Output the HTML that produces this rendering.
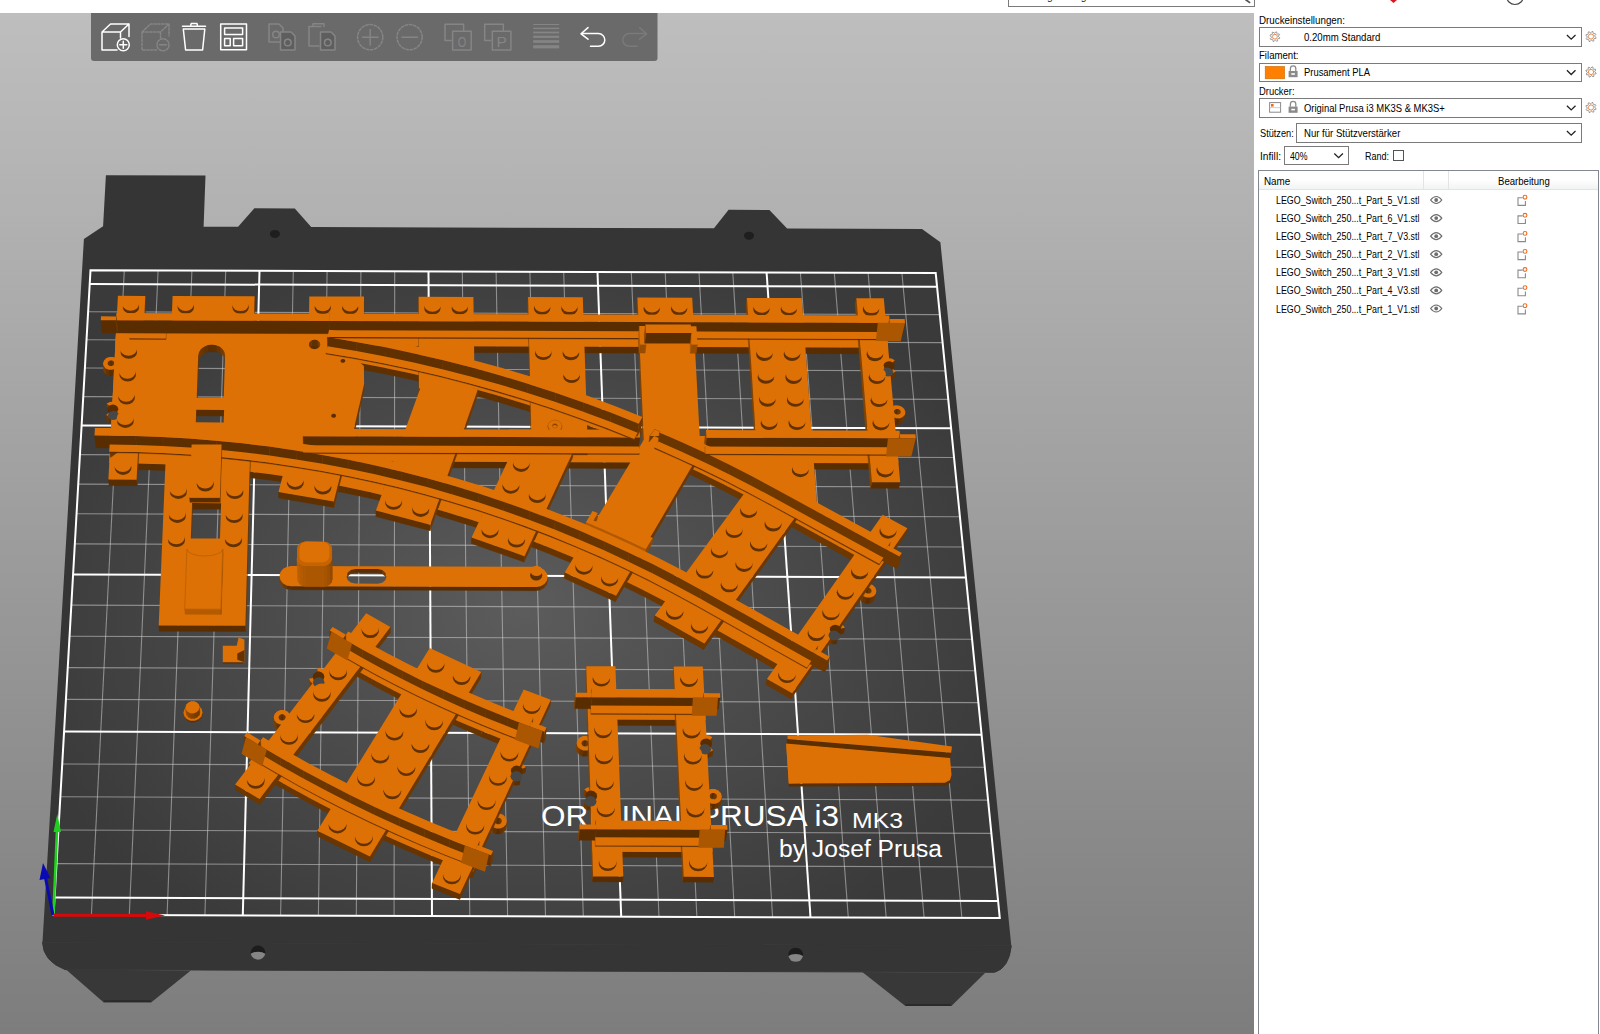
<!DOCTYPE html>
<html><head><meta charset="utf-8"><title>PrusaSlicer</title>
<style>
html,body{margin:0;padding:0;}
body{width:1600px;height:1034px;overflow:hidden;background:#fff;position:relative;font-family:"Liberation Sans",sans-serif;font-size:11px;color:#000;}
#canvas{position:absolute;left:0;top:13px;width:1254px;height:1021px;background:linear-gradient(#bebebe,#7d7d7d);}
#scene{position:absolute;left:0;top:0;width:1600px;height:1034px;}
.t{position:absolute;white-space:nowrap;line-height:14px;height:14px;transform-origin:0 50%;}
.cb{position:absolute;border:1px solid #7a7a7a;background:#fff;box-sizing:border-box;}
#list{position:absolute;left:1258px;top:170px;width:341px;height:870px;border:1px solid #828790;box-sizing:border-box;background:#fff;}
#hdr{position:absolute;left:1259px;top:171px;width:339px;height:18px;background:linear-gradient(#fff,#fff 45%,#f2f3f4);border-bottom:1px solid #e1e3e6;}
.sep{position:absolute;top:171px;width:1px;height:18px;background:#e3e4e6;}
</style></head><body>
<div id="canvas"></div>
<!-- top strip -->
<div style="position:absolute;left:1007.5px;top:-14px;width:247px;height:20.7px;border:1px solid #7a7a7a;box-sizing:border-box;"></div>
<div class="t" style="left:1012px;top:-10.8px;font-size:11.5px;color:#222;transform:scaleX(0.9);">Suchbegriff eingeben</div>
<div class="cb" style="left:1258.5px;top:27.0px;width:323.5px;height:19.6px;"></div>
<div class="cb" style="left:1258.5px;top:62.5px;width:323.5px;height:19.6px;"></div>
<div class="cb" style="left:1258.5px;top:98.0px;width:323.5px;height:19.6px;"></div>
<div class="cb" style="left:1296.0px;top:123.0px;width:286.0px;height:19.6px;"></div>
<div class="cb" style="left:1283.5px;top:146.0px;width:65.5px;height:19.0px;"></div>
<div class="cb" style="left:1393px;top:149.6px;width:11px;height:11px;border-color:#555;"></div>
<div class="t" style="left:1259.0px;top:12.5px;font-size:11.5px;color:#000;transform:scaleX(0.851);">Druckeinstellungen:</div>
<div class="t" style="left:1303.7px;top:30.0px;font-size:11.5px;color:#000;transform:scaleX(0.835);">0.20mm Standard</div>
<div class="t" style="left:1259.0px;top:48.0px;font-size:11.5px;color:#000;transform:scaleX(0.835);">Filament:</div>
<div class="t" style="left:1304.0px;top:65.3px;font-size:11.5px;color:#000;transform:scaleX(0.819);">Prusament PLA</div>
<div class="t" style="left:1259.0px;top:83.5px;font-size:11.5px;color:#000;transform:scaleX(0.817);">Drucker:</div>
<div class="t" style="left:1304.0px;top:100.7px;font-size:11.5px;color:#000;transform:scaleX(0.820);">Original Prusa i3 MK3S &amp; MK3S+</div>
<div class="t" style="left:1259.8px;top:126.0px;font-size:11.5px;color:#000;transform:scaleX(0.799);">Stützen:</div>
<div class="t" style="left:1303.7px;top:126.0px;font-size:11.5px;color:#000;transform:scaleX(0.833);">Nur für Stützverstärker</div>
<div class="t" style="left:1259.5px;top:148.5px;font-size:11.5px;color:#000;transform:scaleX(0.888);">Infill:</div>
<div class="t" style="left:1290.0px;top:148.5px;font-size:11.5px;color:#000;transform:scaleX(0.760);">40%</div>
<div class="t" style="left:1365.0px;top:148.5px;font-size:11.5px;color:#000;transform:scaleX(0.782);">Rand:</div>
<div id="list"></div><div id="hdr"></div><div class="sep" style="left:1423px"></div><div class="sep" style="left:1448px"></div>
<div class="t" style="left:1264.3px;top:173.7px;font-size:11.5px;color:#000;transform:scaleX(0.857);">Name</div>
<div class="t" style="left:1497.6px;top:173.7px;font-size:11.5px;color:#000;transform:scaleX(0.835);">Bearbeitung</div>
<div class="t" style="left:1275.5px;top:193.0px;font-size:11.5px;color:#000;transform:scaleX(0.771);">LEGO_Switch_250...t_Part_5_V1.stl</div>
<div class="t" style="left:1275.5px;top:211.1px;font-size:11.5px;color:#000;transform:scaleX(0.771);">LEGO_Switch_250...t_Part_6_V1.stl</div>
<div class="t" style="left:1275.5px;top:229.2px;font-size:11.5px;color:#000;transform:scaleX(0.771);">LEGO_Switch_250...t_Part_7_V3.stl</div>
<div class="t" style="left:1275.5px;top:247.2px;font-size:11.5px;color:#000;transform:scaleX(0.771);">LEGO_Switch_250...t_Part_2_V1.stl</div>
<div class="t" style="left:1275.5px;top:265.3px;font-size:11.5px;color:#000;transform:scaleX(0.771);">LEGO_Switch_250...t_Part_3_V1.stl</div>
<div class="t" style="left:1275.5px;top:283.4px;font-size:11.5px;color:#000;transform:scaleX(0.771);">LEGO_Switch_250...t_Part_4_V3.stl</div>
<div class="t" style="left:1275.5px;top:301.5px;font-size:11.5px;color:#000;transform:scaleX(0.771);">LEGO_Switch_250...t_Part_1_V1.stl</div>
<svg id="scene" viewBox="0 0 1600 1034">
<defs>
<radialGradient id="bedg" gradientUnits="userSpaceOnUse" cx="520" cy="610" r="520" gradientTransform="translate(520 610) scale(1 0.75) translate(-520 -610)">
<stop offset="0" stop-color="#5c5c5c"/><stop offset="0.45" stop-color="#4c4c4c"/><stop offset="1" stop-color="#3a3a3a"/>
</radialGradient>
</defs>
<polygon points="42.5,942.2 83.9,239.0 103.1,226.3 105.9,175.3 205.5,175.6 203.6,226.7 238.1,226.8 254.4,208.3 294.8,208.4 311.2,227.0 714.0,228.3 728.6,209.8 769.4,209.9 787.1,228.5 922.0,229.0 940.4,242.3 1011.3,945.8" fill="#353535"/>
<path d="M42.5,942.2 Q43,961 65,969.6 L994.6,972.3 Q1009,968 1011.3,945.8 Z" fill="#353535" stroke="#353535" stroke-width="1"/>
<polygon points="66,969.5 103.5,1002.3 151.4,1002.3 190.8,970.4" fill="#383838"/>
<polygon points="103.5,1002.3 151.4,1002.3 150.4,1000.3 104.5,1000.3" fill="#2a2a2a"/>
<polygon points="862.3,972 905.4,1006 951.4,1006 985,973" fill="#383838"/>
<polygon points="905.4,1006 951.4,1006 950.4,1004 906.4,1004" fill="#2a2a2a"/>
<ellipse cx="274.9" cy="233.9" rx="5" ry="4" fill="#1e1e1e"/>
<ellipse cx="749.0" cy="235.7" rx="5" ry="4" fill="#1e1e1e"/>
<ellipse cx="258.0" cy="952.6" rx="7.4" ry="7" fill="#1c1c1c"/>
<path d="M250.7,953.8 a7.4,7 0 0 0 14.6,0 a9,5 0 0 0 -14.6,0Z" fill="#858585"/>
<ellipse cx="795.7" cy="954.8" rx="7.4" ry="7" fill="#1c1c1c"/>
<path d="M788.4,956.0 a7.4,7 0 0 0 14.6,0 a9,5 0 0 0 -14.6,0Z" fill="#858585"/>
<polygon points="53.6,914.7 999.8,918.1 935.7,273.1 90.5,270.3" fill="url(#bedg)"/>
<g stroke="#cfcfcf" stroke-opacity="0.55" stroke-width="1.1"><line x1="91.4" y1="914.8" x2="124.3" y2="270.4"/><line x1="129.3" y1="915.0" x2="158.1" y2="270.6"/><line x1="167.1" y1="915.1" x2="191.9" y2="270.7"/><line x1="204.9" y1="915.2" x2="225.7" y2="270.8"/><line x1="280.6" y1="915.5" x2="293.3" y2="271.0"/><line x1="318.4" y1="915.6" x2="327.1" y2="271.1"/><line x1="356.3" y1="915.8" x2="360.9" y2="271.2"/><line x1="394.1" y1="915.9" x2="394.7" y2="271.3"/><line x1="469.8" y1="916.2" x2="462.3" y2="271.5"/><line x1="507.6" y1="916.3" x2="496.1" y2="271.7"/><line x1="545.5" y1="916.5" x2="529.9" y2="271.8"/><line x1="583.3" y1="916.6" x2="563.7" y2="271.9"/><line x1="659.0" y1="916.9" x2="631.3" y2="272.1"/><line x1="696.9" y1="917.0" x2="665.2" y2="272.2"/><line x1="734.7" y1="917.2" x2="699.0" y2="272.3"/><line x1="772.6" y1="917.3" x2="732.8" y2="272.4"/><line x1="848.3" y1="917.6" x2="800.4" y2="272.6"/><line x1="886.2" y1="917.7" x2="834.3" y2="272.8"/><line x1="924.1" y1="917.8" x2="868.1" y2="272.9"/><line x1="961.9" y1="918.0" x2="901.9" y2="273.0"/><line x1="56.5" y1="863.6" x2="994.7" y2="867.0"/><line x1="58.5" y1="830.0" x2="991.4" y2="833.4"/><line x1="60.4" y1="796.8" x2="988.1" y2="800.1"/><line x1="62.2" y1="764.0" x2="984.8" y2="767.2"/><line x1="65.9" y1="699.4" x2="978.4" y2="702.6"/><line x1="67.7" y1="667.6" x2="975.2" y2="670.8"/><line x1="69.5" y1="636.2" x2="972.1" y2="639.3"/><line x1="71.3" y1="605.1" x2="969.0" y2="608.2"/><line x1="74.8" y1="543.9" x2="962.9" y2="547.0"/><line x1="76.5" y1="513.8" x2="959.9" y2="516.8"/><line x1="78.3" y1="484.1" x2="957.0" y2="487.0"/><line x1="79.9" y1="454.6" x2="954.1" y2="457.5"/><line x1="83.3" y1="396.6" x2="948.3" y2="399.4"/><line x1="84.9" y1="368.0" x2="945.4" y2="370.9"/><line x1="86.5" y1="339.7" x2="942.6" y2="342.6"/><line x1="88.1" y1="311.8" x2="939.9" y2="314.6"/></g>
<g stroke="#ffffff" stroke-width="2"><line x1="242.8" y1="915.4" x2="259.5" y2="270.9"/><line x1="432.0" y1="916.1" x2="428.5" y2="271.4"/><line x1="621.2" y1="916.7" x2="597.5" y2="272.0"/><line x1="810.5" y1="917.4" x2="766.6" y2="272.5"/><line x1="54.6" y1="897.6" x2="998.1" y2="901.0"/><line x1="64.1" y1="731.5" x2="981.6" y2="734.7"/><line x1="73.1" y1="574.4" x2="966.0" y2="577.4"/><line x1="81.6" y1="425.4" x2="951.2" y2="428.3"/><line x1="89.7" y1="284.1" x2="937.1" y2="286.8"/></g>
<polygon points="53.6,914.7 999.8,918.1 935.7,273.1 90.5,270.3" fill="none" stroke="#fff" stroke-width="2"/>
<text x="541" y="826" font-family="Liberation Sans, sans-serif" font-size="29" fill="#fff" textLength="298" lengthAdjust="spacingAndGlyphs">ORIGINAL PRUSA i3</text>
<text x="852" y="828" font-family="Liberation Sans, sans-serif" font-size="22" fill="#fff" textLength="51" lengthAdjust="spacingAndGlyphs">MK3</text>
<text x="779" y="857" font-family="Liberation Sans, sans-serif" font-size="23" fill="#fff" textLength="163" lengthAdjust="spacingAndGlyphs">by Josef Prusa</text>
<path d="M183.5 712.5 L184.3 716.1 L184.4 717.5 L183.6 713.9Z" fill="#844200" stroke="#844200" stroke-width="0.4"/><path d="M184.3 716.1 L186.8 719.0 L186.9 720.4 L184.4 717.5Z" fill="#7a3d00" stroke="#7a3d00" stroke-width="0.4"/><path d="M186.8 719.0 L190.6 720.7 L190.7 722.1 L186.9 720.4Z" fill="#673400" stroke="#673400" stroke-width="0.4"/><path d="M190.6 720.7 L194.8 720.7 L194.9 722.1 L190.7 722.1Z" fill="#5a2d00" stroke="#5a2d00" stroke-width="0.4"/><path d="M194.8 720.7 L198.7 719.1 L198.8 720.5 L194.9 722.1Z" fill="#653300" stroke="#653300" stroke-width="0.4"/><path d="M198.7 719.1 L201.4 716.2 L201.6 717.6 L198.8 720.5Z" fill="#6d3700" stroke="#6d3700" stroke-width="0.4"/><path d="M201.4 716.2 L202.5 712.5 L202.6 714.0 L201.6 717.6Z" fill="#6e3700" stroke="#6e3700" stroke-width="0.4"/><path d="M202.5 712.5 L201.7 708.9 L199.1 706.0 L195.4 704.4 L191.2 704.4 L187.3 706.0 L184.5 708.9 L183.5 712.5 L184.3 716.1 L186.8 719.0 L190.6 720.7 L194.8 720.7 L198.7 719.1 L201.4 716.2Z" fill="#dd7105" fill-rule="evenodd"/>
<path d="M190.4 558.1 L219.7 558.2 L219.9 561.1 L190.7 561.0Z" fill="#5a2d00" stroke="#5a2d00" stroke-width="0.4"/><path d="M219.7 558.2 L220.2 541.5 L220.4 544.4 L219.9 561.1Z" fill="#6d3700" stroke="#6d3700" stroke-width="0.4"/><path d="M190.4 558.1 L219.7 558.2 L220.2 541.5 L191.0 541.4Z" fill="#dd7105" fill-rule="evenodd"/>
<path d="M291.2 586.2 L536.1 587.0 L535.8 590.7 L291.3 589.8ZM378.0 569.0 L355.1 568.9 L355.2 572.6 L378.0 572.7Z" fill="#5a2d00" stroke="#5a2d00" stroke-width="0.4"/><path d="M536.1 587.0 L540.6 586.2 L540.3 589.9 L535.8 590.7Z" fill="#5e2f00" stroke="#5e2f00" stroke-width="0.4"/><path d="M540.6 586.2 L544.4 584.1 L544.1 587.7 L540.3 589.9Z" fill="#683400" stroke="#683400" stroke-width="0.4"/><path d="M544.4 584.1 L546.9 580.8 L546.6 584.5 L544.1 587.7ZM546.9 580.8 L547.7 576.9 L547.4 580.6 L546.6 584.5ZM282.8 583.2 L286.6 585.4 L286.8 589.0 L283.0 586.8ZM347.7 572.5 L346.5 576.2 L346.5 579.9 L347.7 576.2Z" fill="#6e3700" stroke="#6e3700" stroke-width="0.4"/><path d="M279.5 576.0 L280.4 579.9 L280.5 583.5 L279.7 579.7Z" fill="#844200" stroke="#844200" stroke-width="0.4"/><path d="M280.4 579.9 L282.8 583.2 L283.0 586.8 L280.5 583.5Z" fill="#7c3e00" stroke="#7c3e00" stroke-width="0.4"/><path d="M286.6 585.4 L291.2 586.2 L291.3 589.8 L286.8 589.0Z" fill="#5f3000" stroke="#5f3000" stroke-width="0.4"/><path d="M355.1 568.9 L350.8 569.9 L350.9 573.5 L355.2 572.6ZM382.3 570.0 L378.0 569.0 L378.0 572.7 L382.3 573.7Z" fill="#603000" stroke="#603000" stroke-width="0.4"/><path d="M350.8 569.9 L347.7 572.5 L347.7 576.2 L350.9 573.5Z" fill="#6b3600" stroke="#6b3600" stroke-width="0.4"/><path d="M386.6 576.3 L385.4 572.7 L385.4 576.4 L386.5 580.0Z" fill="#834200" stroke="#834200" stroke-width="0.4"/><path d="M385.4 572.7 L382.3 570.0 L382.3 573.7 L385.4 576.4Z" fill="#763b00" stroke="#763b00" stroke-width="0.4"/><path d="M291.2 586.2 L536.1 587.0 L540.6 586.2 L544.4 584.1 L546.9 580.8 L547.7 576.9 L546.7 573.0 L544.0 569.7 L540.2 567.5 L535.6 566.8 L291.5 565.9 L287.0 566.7 L283.1 568.8 L280.5 572.1 L279.5 576.0 L280.4 579.9 L282.8 583.2 L286.6 585.4ZM355.1 568.9 L350.8 569.9 L347.7 572.5 L346.5 576.2 L347.6 579.9 L350.7 582.6 L355.0 583.6 L377.9 583.7 L382.3 582.7 L385.4 580.0 L386.6 576.3 L385.4 572.7 L382.3 570.0 L378.0 569.0Z" fill="#dd7105" fill-rule="evenodd"/>
<polygon points="222.8,662.2 243.5,662.2 243.5,663.5 222.8,663.5" fill="#5a2d00"/><polygon points="222.8,645.7 236.7,645.7 238.6,637.6 244.4,639.5 244.4,662.2 222.8,662.2" fill="#dd7105"/><polygon points="237.3,653.5 244.4,650.0 244.4,662.2 237.3,659.7" fill="#653300"/>
<polygon points="788.8,783.4 945.0,782.8 950.0,780.0 951.5,775.0 951.5,778.1 950.0,783.1 945.0,785.9 788.8,786.5" fill="#5d2e00"/><polygon points="786.2,743.1 950.0,757.5 951.5,775.0 950.0,780.0 945.0,782.8 788.8,783.4" fill="#dd7105"/><polygon points="786.2,744.4 803.5,745.0 804.4,783.1 788.8,783.4" fill="#dd7105"/><polygon points="787.5,739.0 951.2,752.8 950.0,758.1 786.2,743.4" fill="#5b2e00"/><polygon points="787.5,735.6 867.5,734.8 951.9,746.5 951.2,752.8 787.5,739.0" fill="#dd7105"/>
<path d="M115.4 345.1 L888.2 347.7 L886.8 353.9 L116.0 351.4Z" fill="#5a2d00" stroke="#5a2d00" stroke-width="0.4"/><path d="M115.4 345.1 L888.2 347.7 L886.4 327.6 L116.4 325.1Z" fill="#dd7105" fill-rule="evenodd"/>
<path d="M303.2 461.3 L639.1 462.4 L638.4 468.5 L303.4 467.4Z" fill="#5a2d00" stroke="#5a2d00" stroke-width="0.4"/><path d="M303.2 461.3 L639.1 462.4 L638.2 441.6 L303.6 440.4Z" fill="#dd7105" fill-rule="evenodd"/>
<path d="M705.4 462.7 L898.5 463.3 L897.1 469.4 L704.5 468.7Z" fill="#5a2d00" stroke="#5a2d00" stroke-width="0.4"/><path d="M704.2 441.8 L705.4 462.7 L704.5 468.7 L703.3 447.9Z" fill="#854300" stroke="#854300" stroke-width="0.4"/><path d="M705.4 462.7 L898.5 463.3 L896.6 442.4 L704.2 441.8Z" fill="#dd7105" fill-rule="evenodd"/>
<path d="M109.2 463.0 L135.6 463.4 L136.3 469.5 L109.9 469.1Z" fill="#5b2d00" stroke="#5b2d00" stroke-width="0.4"/><path d="M135.6 463.4 L162.0 464.3 L162.6 470.4 L136.3 469.5Z" fill="#5b2e00" stroke="#5b2e00" stroke-width="0.4"/><path d="M162.0 464.3 L188.3 465.8 L188.8 471.9 L162.6 470.4ZM188.3 465.8 L214.6 467.9 L215.0 474.0 L188.8 471.9Z" fill="#5c2e00" stroke="#5c2e00" stroke-width="0.4"/><path d="M214.6 467.9 L240.8 470.6 L241.1 476.6 L215.0 474.0ZM240.8 470.6 L266.9 473.8 L267.2 479.8 L241.1 476.6Z" fill="#5d2f00" stroke="#5d2f00" stroke-width="0.4"/><path d="M266.9 473.8 L292.9 477.6 L293.1 483.6 L267.2 479.8Z" fill="#5e2f00" stroke="#5e2f00" stroke-width="0.4"/><path d="M292.9 477.6 L318.9 481.9 L319.0 488.0 L293.1 483.6Z" fill="#5f2f00" stroke="#5f2f00" stroke-width="0.4"/><path d="M318.9 481.9 L344.7 486.8 L344.8 492.9 L319.0 488.0Z" fill="#5f3000" stroke="#5f3000" stroke-width="0.4"/><path d="M344.7 486.8 L370.4 492.3 L370.4 498.3 L344.8 492.9ZM370.4 492.3 L396.0 498.4 L396.0 504.4 L370.4 498.3Z" fill="#603000" stroke="#603000" stroke-width="0.4"/><path d="M396.0 498.4 L421.5 505.0 L421.4 511.0 L396.0 504.4Z" fill="#613000" stroke="#613000" stroke-width="0.4"/><path d="M421.5 505.0 L446.8 512.2 L446.6 518.2 L421.4 511.0Z" fill="#613100" stroke="#613100" stroke-width="0.4"/><path d="M446.8 512.2 L472.0 519.9 L471.7 525.9 L446.6 518.2Z" fill="#623100" stroke="#623100" stroke-width="0.4"/><path d="M472.0 519.9 L497.0 528.2 L496.7 534.2 L471.7 525.9Z" fill="#633200" stroke="#633200" stroke-width="0.4"/><path d="M497.0 528.2 L521.9 537.1 L521.4 543.1 L496.7 534.2Z" fill="#643200" stroke="#643200" stroke-width="0.4"/><path d="M521.9 537.1 L546.5 546.5 L546.0 552.5 L521.4 543.1Z" fill="#663300" stroke="#663300" stroke-width="0.4"/><path d="M546.5 546.5 L571.0 556.5 L570.4 562.5 L546.0 552.5Z" fill="#673400" stroke="#673400" stroke-width="0.4"/><path d="M571.0 556.5 L595.3 567.1 L594.6 573.0 L570.4 562.5Z" fill="#683400" stroke="#683400" stroke-width="0.4"/><path d="M595.3 567.1 L619.3 578.2 L618.6 584.1 L594.6 573.0Z" fill="#693500" stroke="#693500" stroke-width="0.4"/><path d="M619.3 578.2 L643.1 589.9 L642.4 595.8 L618.6 584.1Z" fill="#6b3500" stroke="#6b3500" stroke-width="0.4"/><path d="M643.1 589.9 L666.7 602.2 L665.9 608.0 L642.4 595.8Z" fill="#6c3600" stroke="#6c3600" stroke-width="0.4"/><path d="M666.7 602.2 L690.1 615.0 L689.2 620.8 L665.9 608.0Z" fill="#6d3700" stroke="#6d3700" stroke-width="0.4"/><path d="M690.1 615.0 L802.5 678.3 L801.3 684.1 L689.2 620.8ZM802.5 678.3 L817.0 657.6 L815.8 663.3 L801.3 684.1Z" fill="#6e3700" stroke="#6e3700" stroke-width="0.4"/><path d="M109.2 463.0 L135.6 463.4 L162.0 464.3 L188.3 465.8 L214.6 467.9 L240.8 470.6 L266.9 473.8 L292.9 477.6 L318.9 481.9 L344.7 486.8 L370.4 492.3 L396.0 498.4 L421.5 505.0 L446.8 512.2 L472.0 519.9 L497.0 528.2 L521.9 537.1 L546.5 546.5 L571.0 556.5 L595.3 567.1 L619.3 578.2 L643.1 589.9 L666.7 602.2 L690.1 615.0 L802.5 678.3 L817.0 657.6 L704.8 594.7 L680.9 581.6 L656.7 569.1 L632.3 557.2 L607.7 545.9 L582.8 535.1 L557.8 524.9 L532.5 515.3 L507.1 506.2 L481.5 497.7 L455.7 489.9 L429.8 482.5 L403.8 475.8 L377.6 469.6 L351.3 464.0 L324.8 459.0 L298.3 454.6 L271.7 450.8 L245.0 447.5 L218.2 444.8 L191.3 442.7 L164.4 441.1 L137.4 440.2 L110.4 439.8Z" fill="#dd7105" fill-rule="evenodd"/>
<path d="M325.8 357.2 L354.4 362.0 L354.5 368.3 L325.9 363.5Z" fill="#5f2f00" stroke="#5f2f00" stroke-width="0.4"/><path d="M354.4 362.0 L383.0 367.4 L382.9 373.6 L354.5 368.3Z" fill="#5f3000" stroke="#5f3000" stroke-width="0.4"/><path d="M383.0 367.4 L411.4 373.4 L411.3 379.6 L382.9 373.6ZM411.4 373.4 L439.6 380.0 L439.5 386.2 L411.3 379.6Z" fill="#603000" stroke="#603000" stroke-width="0.4"/><path d="M439.6 380.0 L467.8 387.2 L467.5 393.4 L439.5 386.2ZM467.8 387.2 L495.8 395.0 L495.5 401.2 L467.5 393.4Z" fill="#613100" stroke="#613100" stroke-width="0.4"/><path d="M495.8 395.0 L523.7 403.4 L523.2 409.6 L495.5 401.2Z" fill="#623100" stroke="#623100" stroke-width="0.4"/><path d="M523.7 403.4 L551.3 412.4 L550.9 418.6 L523.2 409.6Z" fill="#633200" stroke="#633200" stroke-width="0.4"/><path d="M551.3 412.4 L578.9 422.1 L578.3 428.2 L550.9 418.6Z" fill="#643200" stroke="#643200" stroke-width="0.4"/><path d="M578.9 422.1 L606.2 432.3 L605.6 438.4 L578.3 428.2Z" fill="#663300" stroke="#663300" stroke-width="0.4"/><path d="M606.2 432.3 L633.4 443.1 L632.7 449.2 L605.6 438.4Z" fill="#673400" stroke="#673400" stroke-width="0.4"/><path d="M633.4 443.1 L641.3 428.8 L640.6 434.9 L632.7 449.2Z" fill="#6e3700" stroke="#6e3700" stroke-width="0.4"/><path d="M325.8 357.2 L354.4 362.0 L383.0 367.4 L411.4 373.4 L439.6 380.0 L467.8 387.2 L495.8 395.0 L523.7 403.4 L551.3 412.4 L578.9 422.1 L606.2 432.3 L633.4 443.1 L641.3 428.8 L613.8 417.8 L586.0 407.5 L558.1 397.7 L530.0 388.6 L501.8 380.1 L473.4 372.2 L444.9 364.9 L416.2 358.3 L387.4 352.2 L358.5 346.8 L329.5 341.9Z" fill="#dd7105" fill-rule="evenodd"/>
<path d="M653.9 451.8 L677.1 462.0 L676.2 468.1 L653.1 457.9Z" fill="#693500" stroke="#693500" stroke-width="0.4"/><path d="M677.1 462.0 L700.1 472.7 L699.2 478.8 L676.2 468.1Z" fill="#6a3500" stroke="#6a3500" stroke-width="0.4"/><path d="M700.1 472.7 L722.9 483.9 L722.0 489.9 L699.2 478.8Z" fill="#6b3600" stroke="#6b3600" stroke-width="0.4"/><path d="M722.9 483.9 L745.6 495.5 L744.6 501.5 L722.0 489.9Z" fill="#6c3600" stroke="#6c3600" stroke-width="0.4"/><path d="M745.6 495.5 L768.1 507.6 L767.0 513.6 L744.6 501.5Z" fill="#6d3700" stroke="#6d3700" stroke-width="0.4"/><path d="M768.1 507.6 L879.2 568.5 L877.8 574.5 L767.0 513.6ZM879.2 568.5 L889.0 554.6 L887.6 560.5 L877.8 574.5Z" fill="#6e3700" stroke="#6e3700" stroke-width="0.4"/><path d="M653.9 451.8 L677.1 462.0 L700.1 472.7 L722.9 483.9 L745.6 495.5 L768.1 507.6 L879.2 568.5 L889.0 554.6 L778.0 493.9 L755.2 481.7 L732.2 470.0 L709.0 458.7 L685.6 447.9 L662.1 437.5Z" fill="#dd7105" fill-rule="evenodd"/>
<path d="M333.7 657.5 L353.8 669.1 L353.9 674.8 L333.9 663.2Z" fill="#6d3700" stroke="#6d3700" stroke-width="0.4"/><path d="M353.8 669.1 L374.3 680.3 L374.3 686.0 L353.9 674.8Z" fill="#6c3600" stroke="#6c3600" stroke-width="0.4"/><path d="M374.3 680.3 L395.1 691.2 L395.0 696.9 L374.3 686.0Z" fill="#6b3600" stroke="#6b3600" stroke-width="0.4"/><path d="M395.1 691.2 L416.2 701.7 L416.1 707.4 L395.0 696.9Z" fill="#6a3500" stroke="#6a3500" stroke-width="0.4"/><path d="M416.2 701.7 L437.7 711.9 L437.5 717.6 L416.1 707.4Z" fill="#693500" stroke="#693500" stroke-width="0.4"/><path d="M437.7 711.9 L459.5 721.7 L459.2 727.3 L437.5 717.6Z" fill="#683400" stroke="#683400" stroke-width="0.4"/><path d="M459.5 721.7 L481.6 731.1 L481.3 736.7 L459.2 727.3Z" fill="#673400" stroke="#673400" stroke-width="0.4"/><path d="M481.6 731.1 L504.0 740.1 L503.6 745.7 L481.3 736.7Z" fill="#663300" stroke="#663300" stroke-width="0.4"/><path d="M504.0 740.1 L526.6 748.7 L526.2 754.3 L503.6 745.7Z" fill="#653300" stroke="#653300" stroke-width="0.4"/><path d="M526.6 748.7 L535.0 730.1 L534.5 735.8 L526.2 754.3Z" fill="#6f3700" stroke="#6f3700" stroke-width="0.4"/><path d="M333.7 657.5 L353.8 669.1 L374.3 680.3 L395.1 691.2 L416.2 701.7 L437.7 711.9 L459.5 721.7 L481.6 731.1 L504.0 740.1 L526.6 748.7 L535.0 730.1 L512.9 721.8 L491.0 713.0 L469.4 703.8 L448.1 694.3 L427.1 684.4 L406.4 674.1 L386.1 663.5 L366.1 652.6 L346.5 641.3Z" fill="#dd7105" fill-rule="evenodd"/>
<path d="M248.5 763.2 L269.4 775.6 L269.7 781.2 L248.9 768.8Z" fill="#6d3700" stroke="#6d3700" stroke-width="0.4"/><path d="M269.4 775.6 L290.7 787.8 L290.9 793.3 L269.7 781.2Z" fill="#6c3600" stroke="#6c3600" stroke-width="0.4"/><path d="M290.7 787.8 L312.3 799.6 L312.5 805.1 L290.9 793.3Z" fill="#6b3600" stroke="#6b3600" stroke-width="0.4"/><path d="M312.3 799.6 L334.3 811.0 L334.4 816.5 L312.5 805.1Z" fill="#6a3500" stroke="#6a3500" stroke-width="0.4"/><path d="M334.3 811.0 L356.7 822.1 L356.7 827.6 L334.4 816.5Z" fill="#693500" stroke="#693500" stroke-width="0.4"/><path d="M356.7 822.1 L379.3 832.9 L379.3 838.3 L356.7 827.6Z" fill="#693400" stroke="#693400" stroke-width="0.4"/><path d="M379.3 832.9 L402.3 843.2 L402.2 848.6 L379.3 838.3Z" fill="#683400" stroke="#683400" stroke-width="0.4"/><path d="M402.3 843.2 L425.5 853.2 L425.4 858.6 L402.2 848.6Z" fill="#673300" stroke="#673300" stroke-width="0.4"/><path d="M425.5 853.2 L449.1 862.8 L448.9 868.2 L425.4 858.6Z" fill="#663300" stroke="#663300" stroke-width="0.4"/><path d="M449.1 862.8 L472.9 872.0 L472.6 877.4 L448.9 868.2Z" fill="#653200" stroke="#653200" stroke-width="0.4"/><path d="M472.9 872.0 L481.6 852.7 L481.3 858.1 L472.6 877.4Z" fill="#6f3700" stroke="#6f3700" stroke-width="0.4"/><path d="M248.5 763.2 L269.4 775.6 L290.7 787.8 L312.3 799.6 L334.3 811.0 L356.7 822.1 L379.3 832.9 L402.3 843.2 L425.5 853.2 L449.1 862.8 L472.9 872.0 L481.6 852.7 L458.3 843.7 L435.2 834.3 L412.4 824.6 L389.9 814.4 L367.7 804.0 L345.8 793.1 L324.3 781.9 L303.1 770.4 L282.2 758.6 L261.7 746.4Z" fill="#dd7105" fill-rule="evenodd"/>
<path d="M588.0 719.6 L646.8 719.8 L646.1 725.5 L587.4 725.3ZM646.8 719.8 L705.6 720.1 L704.7 725.7 L646.1 725.5Z" fill="#5a2d00" stroke="#5a2d00" stroke-width="0.4"/><path d="M587.4 699.7 L588.0 719.6 L587.4 725.3 L586.8 705.4Z" fill="#854300" stroke="#854300" stroke-width="0.4"/><path d="M588.0 719.6 L646.8 719.8 L705.6 720.1 L704.6 700.1 L646.0 699.9 L587.4 699.7Z" fill="#dd7105" fill-rule="evenodd"/>
<path d="M592.3 851.7 L652.4 851.9 L651.6 857.3 L591.6 857.1ZM652.4 851.9 L712.6 852.1 L711.6 857.5 L651.6 857.3Z" fill="#5a2d00" stroke="#5a2d00" stroke-width="0.4"/><path d="M591.6 830.8 L592.3 851.7 L591.6 857.1 L591.0 836.3Z" fill="#854300" stroke="#854300" stroke-width="0.4"/><path d="M592.3 851.7 L652.4 851.9 L712.6 852.1 L711.5 831.3 L651.5 831.1 L591.6 830.8Z" fill="#dd7105" fill-rule="evenodd"/>
<path d="M103.0 363.3 L103.7 366.1 L104.4 372.3 L103.7 369.5Z" fill="#844200" stroke="#844200" stroke-width="0.4"/><path d="M103.7 366.1 L105.7 368.4 L106.4 374.6 L104.4 372.3Z" fill="#7a3d00" stroke="#7a3d00" stroke-width="0.4"/><path d="M105.7 368.4 L108.9 369.7 L109.6 375.9 L106.4 374.6Z" fill="#673400" stroke="#673400" stroke-width="0.4"/><path d="M108.9 369.7 L112.4 369.7 L113.1 375.9 L109.6 375.9ZM112.2 360.6 L110.0 360.6 L110.7 366.8 L112.9 366.8Z" fill="#5a2d00" stroke="#5a2d00" stroke-width="0.4"/><path d="M112.4 369.7 L115.6 368.4 L116.3 374.7 L113.1 375.9Z" fill="#653300" stroke="#653300" stroke-width="0.4"/><path d="M115.6 368.4 L118.0 366.1 L118.6 372.4 L116.3 374.7Z" fill="#6d3700" stroke="#6d3700" stroke-width="0.4"/><path d="M118.0 366.1 L118.9 363.3 L119.6 369.5 L118.6 372.4Z" fill="#6e3700" stroke="#6e3700" stroke-width="0.4"/><path d="M114.4 363.3 L113.8 361.6 L114.5 367.9 L115.1 369.5Z" fill="#824200" stroke="#824200" stroke-width="0.4"/><path d="M113.8 361.6 L112.2 360.6 L112.9 366.8 L114.5 367.9ZM108.3 361.6 L107.5 363.3 L108.2 369.5 L109.0 367.8Z" fill="#6f3800" stroke="#6f3800" stroke-width="0.4"/><path d="M110.0 360.6 L108.3 361.6 L109.0 367.8 L110.7 366.8Z" fill="#693500" stroke="#693500" stroke-width="0.4"/><path d="M118.9 363.3 L118.3 360.5 L116.2 358.2 L113.1 356.9 L109.5 356.9 L106.3 358.1 L104.0 360.4 L103.0 363.3 L103.7 366.1 L105.7 368.4 L108.9 369.7 L112.4 369.7 L115.6 368.4 L118.0 366.1ZM114.4 363.3 L113.8 361.6 L112.2 360.6 L110.0 360.6 L108.3 361.6 L107.5 363.3 L108.1 364.9 L109.8 366.0 L111.9 366.0 L113.7 365.0Z" fill="#dd7105" fill-rule="evenodd"/>
<path d="M106.1 415.0 L109.1 416.6 L109.8 422.7 L106.8 421.2Z" fill="#6b3600" stroke="#6b3600" stroke-width="0.4"/><path d="M109.1 416.6 L112.6 417.1 L113.3 423.2 L109.8 422.7Z" fill="#5e2f00" stroke="#5e2f00" stroke-width="0.4"/><path d="M112.6 417.1 L116.2 416.4 L116.9 422.6 L113.3 423.2ZM113.2 404.6 L115.2 405.0 L115.9 411.2 L113.9 410.8Z" fill="#5f3000" stroke="#5f3000" stroke-width="0.4"/><path d="M116.2 416.4 L119.2 414.7 L119.9 420.8 L116.9 422.6Z" fill="#683400" stroke="#683400" stroke-width="0.4"/><path d="M119.2 414.7 L121.3 412.2 L122.0 418.4 L119.9 420.8ZM121.3 412.2 L122.1 409.3 L122.8 415.4 L122.0 418.4ZM115.2 405.0 L116.9 406.0 L117.6 412.2 L115.9 411.2Z" fill="#6e3700" stroke="#6e3700" stroke-width="0.4"/><path d="M106.7 403.4 L109.2 405.8 L109.9 412.0 L107.5 409.6Z" fill="#783c00" stroke="#783c00" stroke-width="0.4"/><path d="M109.2 405.8 L111.0 404.9 L111.7 411.1 L109.9 412.0Z" fill="#673400" stroke="#673400" stroke-width="0.4"/><path d="M111.0 404.9 L113.2 404.6 L113.9 410.8 L111.7 411.1Z" fill="#5d2f00" stroke="#5d2f00" stroke-width="0.4"/><path d="M116.9 406.0 L118.0 407.5 L118.7 413.7 L117.6 412.2Z" fill="#7d3f00" stroke="#7d3f00" stroke-width="0.4"/><path d="M118.0 407.5 L118.3 409.2 L119.0 415.4 L118.7 413.7Z" fill="#844200" stroke="#844200" stroke-width="0.4"/><path d="M106.1 415.0 L109.1 416.6 L112.6 417.1 L116.2 416.4 L119.2 414.7 L121.3 412.2 L122.1 409.3 L121.6 406.3 L119.8 403.8 L116.9 402.1 L113.5 401.4 L109.9 401.9 L106.7 403.4 L109.2 405.8 L111.0 404.9 L113.2 404.6 L115.2 405.0 L116.9 406.0 L118.0 407.5 L118.3 409.2 L117.8 411.0 L116.6 412.5 L114.8 413.5 L112.7 413.9 L110.6 413.6 L108.8 412.7Z" fill="#dd7105" fill-rule="evenodd"/>
<path d="M880.2 362.9 L879.8 365.8 L878.4 372.1 L878.9 369.2Z" fill="#834200" stroke="#834200" stroke-width="0.4"/><path d="M879.8 365.8 L880.7 368.7 L879.4 374.9 L878.4 372.1Z" fill="#844200" stroke="#844200" stroke-width="0.4"/><path d="M880.7 368.7 L882.9 371.2 L881.5 377.4 L879.4 374.9Z" fill="#7d3f00" stroke="#7d3f00" stroke-width="0.4"/><path d="M882.9 371.2 L885.9 372.9 L884.6 379.1 L881.5 377.4ZM883.8 364.1 L884.8 362.7 L883.5 368.9 L882.5 370.4Z" fill="#6e3700" stroke="#6e3700" stroke-width="0.4"/><path d="M885.9 372.9 L889.5 373.5 L888.1 379.8 L884.6 379.1ZM886.5 361.7 L888.5 361.3 L887.1 367.5 L885.1 367.9Z" fill="#5f3000" stroke="#5f3000" stroke-width="0.4"/><path d="M889.5 373.5 L892.9 373.1 L891.6 379.3 L888.1 379.8Z" fill="#5d2f00" stroke="#5d2f00" stroke-width="0.4"/><path d="M892.9 373.1 L895.9 371.6 L894.5 377.8 L891.6 379.3Z" fill="#673400" stroke="#673400" stroke-width="0.4"/><path d="M884.8 362.7 L886.5 361.7 L885.1 367.9 L883.5 368.9Z" fill="#683400" stroke="#683400" stroke-width="0.4"/><path d="M888.5 361.3 L890.6 361.6 L889.2 367.8 L887.1 367.5Z" fill="#5e2f00" stroke="#5e2f00" stroke-width="0.4"/><path d="M890.6 361.6 L892.5 362.5 L891.1 368.7 L889.2 367.8Z" fill="#6b3600" stroke="#6b3600" stroke-width="0.4"/><path d="M892.5 362.5 L894.8 360.2 L893.4 366.4 L891.1 368.7Z" fill="#6c3600" stroke="#6c3600" stroke-width="0.4"/><path d="M894.8 360.2 L891.6 358.6 L888.1 358.2 L884.7 358.8 L881.9 360.5 L880.2 362.9 L879.8 365.8 L880.7 368.7 L882.9 371.2 L885.9 372.9 L889.5 373.5 L892.9 373.1 L895.9 371.6 L893.1 369.3 L891.4 370.1 L889.3 370.4 L887.2 370.0 L885.4 369.0 L884.1 367.5 L883.6 365.8 L883.8 364.1 L884.8 362.7 L886.5 361.7 L888.5 361.3 L890.6 361.6 L892.5 362.5Z" fill="#dd7105" fill-rule="evenodd"/>
<path d="M889.9 408.9 L889.4 411.8 L888.0 418.0 L888.5 415.1Z" fill="#834200" stroke="#834200" stroke-width="0.4"/><path d="M889.4 411.8 L890.4 414.7 L889.0 420.9 L888.0 418.0Z" fill="#844200" stroke="#844200" stroke-width="0.4"/><path d="M890.4 414.7 L892.8 417.0 L891.5 423.2 L889.0 420.9Z" fill="#7a3d00" stroke="#7a3d00" stroke-width="0.4"/><path d="M892.8 417.0 L896.2 418.3 L894.8 424.5 L891.5 423.2Z" fill="#673400" stroke="#673400" stroke-width="0.4"/><path d="M896.2 418.3 L899.7 418.4 L898.3 424.5 L894.8 424.5ZM898.2 409.1 L896.1 409.1 L894.7 415.3 L896.8 415.3Z" fill="#5a2d00" stroke="#5a2d00" stroke-width="0.4"/><path d="M899.7 418.4 L902.8 417.1 L901.4 423.2 L898.3 424.5Z" fill="#653300" stroke="#653300" stroke-width="0.4"/><path d="M902.8 417.1 L904.9 414.8 L903.4 420.9 L901.4 423.2Z" fill="#6d3700" stroke="#6d3700" stroke-width="0.4"/><path d="M900.9 411.9 L900.0 410.1 L898.6 416.3 L899.4 418.0Z" fill="#824200" stroke="#824200" stroke-width="0.4"/><path d="M900.0 410.1 L898.2 409.1 L896.8 415.3 L898.6 416.3ZM894.4 410.1 L893.9 411.8 L892.5 418.0 L893.0 416.3Z" fill="#6f3800" stroke="#6f3800" stroke-width="0.4"/><path d="M896.1 409.1 L894.4 410.1 L893.0 416.3 L894.7 415.3Z" fill="#693500" stroke="#693500" stroke-width="0.4"/><path d="M905.4 411.9 L904.3 409.0 L901.9 406.7 L898.6 405.4 L895.0 405.3 L891.9 406.6 L889.9 408.9 L889.4 411.8 L890.4 414.7 L892.8 417.0 L896.2 418.3 L899.7 418.4 L902.8 417.1 L904.9 414.8ZM900.9 411.9 L900.0 410.1 L898.2 409.1 L896.1 409.1 L894.4 410.1 L893.9 411.8 L894.7 413.5 L896.5 414.6 L898.7 414.6 L900.3 413.6Z" fill="#dd7105" fill-rule="evenodd"/>
<path d="M860.4 587.6 L859.8 590.6 L858.5 596.5 L859.1 593.4Z" fill="#834200" stroke="#834200" stroke-width="0.4"/><path d="M859.8 590.6 L860.9 593.7 L859.6 599.6 L858.5 596.5Z" fill="#844200" stroke="#844200" stroke-width="0.4"/><path d="M860.9 593.7 L863.4 596.2 L862.1 602.1 L859.6 599.6Z" fill="#7a3d00" stroke="#7a3d00" stroke-width="0.4"/><path d="M863.4 596.2 L866.8 597.6 L865.5 603.5 L862.1 602.1Z" fill="#673400" stroke="#673400" stroke-width="0.4"/><path d="M866.8 597.6 L870.5 597.6 L869.2 603.5 L865.5 603.5ZM869.0 587.7 L866.8 587.7 L865.4 593.6 L867.6 593.6Z" fill="#5a2d00" stroke="#5a2d00" stroke-width="0.4"/><path d="M870.5 597.6 L873.7 596.2 L872.4 602.1 L869.2 603.5Z" fill="#653300" stroke="#653300" stroke-width="0.4"/><path d="M873.7 596.2 L875.8 593.8 L874.4 599.6 L872.4 602.1Z" fill="#6d3700" stroke="#6d3700" stroke-width="0.4"/><path d="M871.7 590.7 L870.9 588.9 L869.5 594.7 L870.3 596.6Z" fill="#824200" stroke="#824200" stroke-width="0.4"/><path d="M870.9 588.9 L869.0 587.7 L867.6 593.6 L869.5 594.7ZM865.1 588.8 L864.5 590.7 L863.2 596.5 L863.7 594.7Z" fill="#6f3800" stroke="#6f3800" stroke-width="0.4"/><path d="M866.8 587.7 L865.1 588.8 L863.7 594.7 L865.4 593.6Z" fill="#693500" stroke="#693500" stroke-width="0.4"/><path d="M876.4 590.7 L875.3 587.6 L872.8 585.1 L869.4 583.8 L865.7 583.7 L862.5 585.1 L860.4 587.6 L859.8 590.6 L860.9 593.7 L863.4 596.2 L866.8 597.6 L870.5 597.6 L873.7 596.2 L875.8 593.8ZM871.7 590.7 L870.9 588.9 L869.0 587.7 L866.8 587.7 L865.1 588.8 L864.5 590.7 L865.4 592.5 L867.2 593.6 L869.5 593.6 L871.2 592.5Z" fill="#dd7105" fill-rule="evenodd"/>
<path d="M825.9 628.1 L826.0 631.3 L824.8 637.1 L824.6 633.9Z" fill="#844300" stroke="#844300" stroke-width="0.4"/><path d="M826.0 631.3 L827.6 634.3 L826.4 640.1 L824.8 637.1Z" fill="#824100" stroke="#824100" stroke-width="0.4"/><path d="M827.6 634.3 L830.4 636.7 L829.1 642.5 L826.4 640.1Z" fill="#773c00" stroke="#773c00" stroke-width="0.4"/><path d="M830.4 636.7 L833.8 638.0 L832.6 643.8 L829.1 642.5Z" fill="#663300" stroke="#663300" stroke-width="0.4"/><path d="M833.8 638.0 L837.6 638.2 L836.3 644.0 L832.6 643.8Z" fill="#5b2e00" stroke="#5b2e00" stroke-width="0.4"/><path d="M829.8 628.8 L830.5 627.0 L829.3 632.8 L828.5 634.6Z" fill="#6f3700" stroke="#6f3700" stroke-width="0.4"/><path d="M830.5 627.0 L832.0 625.7 L830.7 631.5 L829.3 632.8Z" fill="#6b3600" stroke="#6b3600" stroke-width="0.4"/><path d="M832.0 625.7 L833.9 624.9 L832.7 630.7 L830.7 631.5Z" fill="#643200" stroke="#643200" stroke-width="0.4"/><path d="M833.9 624.9 L836.2 624.9 L834.9 630.7 L832.7 630.7Z" fill="#5a2d00" stroke="#5a2d00" stroke-width="0.4"/><path d="M836.2 624.9 L838.3 625.6 L837.0 631.4 L834.9 630.7Z" fill="#623100" stroke="#623100" stroke-width="0.4"/><path d="M838.3 625.6 L840.0 626.9 L838.7 632.7 L837.0 631.4Z" fill="#743a00" stroke="#743a00" stroke-width="0.4"/><path d="M840.0 626.9 L841.1 628.6 L839.8 634.4 L838.7 632.7Z" fill="#804000" stroke="#804000" stroke-width="0.4"/><path d="M841.1 628.6 L844.9 627.8 L843.6 633.6 L839.8 634.4Z" fill="#603000" stroke="#603000" stroke-width="0.4"/><path d="M844.9 627.8 L843.0 624.9 L840.1 622.7 L836.6 621.5 L832.9 621.6 L829.5 622.8 L827.1 625.1 L825.9 628.1 L826.0 631.3 L827.6 634.3 L830.4 636.7 L833.8 638.0 L837.6 638.2 L836.8 634.8 L834.5 634.7 L832.5 633.9 L830.8 632.5 L829.9 630.7 L829.8 628.8 L830.5 627.0 L832.0 625.7 L833.9 624.9 L836.2 624.9 L838.3 625.6 L840.0 626.9 L841.1 628.6Z" fill="#dd7105" fill-rule="evenodd"/>
<path d="M309.0 678.8 L310.6 681.8 L310.8 687.5 L309.2 684.5Z" fill="#804000" stroke="#804000" stroke-width="0.4"/><path d="M310.6 681.8 L313.3 684.0 L313.5 689.7 L310.8 687.5Z" fill="#743a00" stroke="#743a00" stroke-width="0.4"/><path d="M313.3 684.0 L316.9 685.1 L317.0 690.8 L313.5 689.7Z" fill="#623100" stroke="#623100" stroke-width="0.4"/><path d="M316.9 685.1 L320.6 685.0 L320.8 690.8 L317.0 690.8Z" fill="#592d00" stroke="#592d00" stroke-width="0.4"/><path d="M320.6 685.0 L324.1 683.7 L324.2 689.4 L320.8 690.8Z" fill="#643200" stroke="#643200" stroke-width="0.4"/><path d="M324.1 683.7 L326.7 681.4 L326.9 687.1 L324.2 689.4Z" fill="#6c3600" stroke="#6c3600" stroke-width="0.4"/><path d="M326.7 681.4 L328.2 678.4 L328.3 684.1 L326.9 687.1Z" fill="#6f3700" stroke="#6f3700" stroke-width="0.4"/><path d="M328.2 678.4 L328.2 675.1 L328.4 680.8 L328.3 684.1Z" fill="#6d3700" stroke="#6d3700" stroke-width="0.4"/><path d="M317.2 668.2 L317.7 671.6 L317.9 677.4 L317.3 673.9Z" fill="#844200" stroke="#844200" stroke-width="0.4"/><path d="M317.7 671.6 L320.0 671.7 L320.1 677.4 L317.9 677.4Z" fill="#5b2e00" stroke="#5b2e00" stroke-width="0.4"/><path d="M320.0 671.7 L322.0 672.5 L322.1 678.2 L320.1 677.4Z" fill="#663300" stroke="#663300" stroke-width="0.4"/><path d="M322.0 672.5 L323.5 673.9 L323.6 679.6 L322.1 678.2Z" fill="#763b00" stroke="#763b00" stroke-width="0.4"/><path d="M323.5 673.9 L324.3 675.7 L324.4 681.4 L323.6 679.6Z" fill="#814100" stroke="#814100" stroke-width="0.4"/><path d="M309.0 678.8 L310.6 681.8 L313.3 684.0 L316.9 685.1 L320.6 685.0 L324.1 683.7 L326.7 681.4 L328.2 678.4 L328.2 675.1 L326.9 672.0 L324.3 669.7 L320.9 668.3 L317.2 668.2 L317.7 671.6 L320.0 671.7 L322.0 672.5 L323.5 673.9 L324.3 675.7 L324.3 677.7 L323.4 679.5 L321.8 680.8 L319.8 681.6 L317.6 681.7 L315.5 681.0 L313.8 679.7 L312.9 677.9Z" fill="#dd7105" fill-rule="evenodd"/>
<path d="M273.7 717.3 L274.5 720.5 L274.7 726.2 L274.0 722.9Z" fill="#844200" stroke="#844200" stroke-width="0.4"/><path d="M274.5 720.5 L276.7 723.1 L277.0 728.8 L274.7 726.2Z" fill="#7a3d00" stroke="#7a3d00" stroke-width="0.4"/><path d="M276.7 723.1 L280.1 724.6 L280.4 730.2 L277.0 728.8Z" fill="#673400" stroke="#673400" stroke-width="0.4"/><path d="M280.1 724.6 L283.9 724.6 L284.1 730.2 L280.4 730.2ZM283.3 714.3 L281.1 714.3 L281.3 719.9 L283.6 719.9Z" fill="#5a2d00" stroke="#5a2d00" stroke-width="0.4"/><path d="M283.9 724.6 L287.3 723.2 L287.5 728.8 L284.1 730.2Z" fill="#653300" stroke="#653300" stroke-width="0.4"/><path d="M287.3 723.2 L289.7 720.6 L289.9 726.2 L287.5 728.8Z" fill="#6d3700" stroke="#6d3700" stroke-width="0.4"/><path d="M289.7 720.6 L290.6 717.4 L290.8 723.0 L289.9 726.2Z" fill="#6e3700" stroke="#6e3700" stroke-width="0.4"/><path d="M285.8 717.3 L285.1 715.4 L285.4 721.1 L286.1 723.0Z" fill="#824200" stroke="#824200" stroke-width="0.4"/><path d="M285.1 715.4 L283.3 714.3 L283.6 719.9 L285.4 721.1ZM279.2 715.4 L278.5 717.3 L278.7 723.0 L279.5 721.1Z" fill="#6f3800" stroke="#6f3800" stroke-width="0.4"/><path d="M281.1 714.3 L279.2 715.4 L279.5 721.1 L281.3 719.9Z" fill="#693500" stroke="#693500" stroke-width="0.4"/><path d="M290.6 717.4 L289.8 714.1 L287.5 711.6 L284.2 710.1 L280.4 710.1 L277.0 711.5 L274.6 714.1 L273.7 717.3 L274.5 720.5 L276.7 723.1 L280.1 724.6 L283.9 724.6 L287.3 723.2 L289.7 720.6ZM285.8 717.3 L285.1 715.4 L283.3 714.3 L281.1 714.3 L279.2 715.4 L278.5 717.3 L279.1 719.2 L280.9 720.4 L283.2 720.4 L285.1 719.2Z" fill="#dd7105" fill-rule="evenodd"/>
<path d="M506.7 770.6 L507.4 773.9 L507.0 779.5 L506.3 776.1Z" fill="#844200" stroke="#844200" stroke-width="0.4"/><path d="M507.4 773.9 L509.5 776.8 L509.1 782.4 L507.0 779.5Z" fill="#7d3f00" stroke="#7d3f00" stroke-width="0.4"/><path d="M509.5 776.8 L512.6 778.8 L512.2 784.4 L509.1 782.4Z" fill="#703800" stroke="#703800" stroke-width="0.4"/><path d="M512.6 778.8 L516.3 779.7 L515.9 785.2 L512.2 784.4Z" fill="#603000" stroke="#603000" stroke-width="0.4"/><path d="M516.3 779.7 L520.1 779.3 L519.7 784.8 L515.9 785.2Z" fill="#5c2e00" stroke="#5c2e00" stroke-width="0.4"/><path d="M510.8 770.7 L511.3 768.7 L510.9 774.3 L510.4 776.2Z" fill="#6e3700" stroke="#6e3700" stroke-width="0.4"/><path d="M511.3 768.7 L512.5 767.1 L512.1 772.6 L510.9 774.3Z" fill="#6d3700" stroke="#6d3700" stroke-width="0.4"/><path d="M512.5 767.1 L514.4 766.0 L514.0 771.5 L512.1 772.6Z" fill="#683400" stroke="#683400" stroke-width="0.4"/><path d="M514.4 766.0 L516.6 765.6 L516.2 771.1 L514.0 771.5ZM516.6 765.6 L518.8 765.9 L518.4 771.5 L516.2 771.1Z" fill="#5e2f00" stroke="#5e2f00" stroke-width="0.4"/><path d="M518.8 765.9 L520.7 767.0 L520.3 772.6 L518.4 771.5Z" fill="#6c3600" stroke="#6c3600" stroke-width="0.4"/><path d="M520.7 767.0 L522.1 768.7 L521.7 774.2 L520.3 772.6Z" fill="#7b3e00" stroke="#7b3e00" stroke-width="0.4"/><path d="M522.1 768.7 L525.8 767.2 L525.3 772.7 L521.7 774.2Z" fill="#643200" stroke="#643200" stroke-width="0.4"/><path d="M525.8 767.2 L523.5 764.4 L520.2 762.6 L516.4 762.0 L512.7 762.6 L509.6 764.5 L507.5 767.3 L506.7 770.6 L507.4 773.9 L509.5 776.8 L512.6 778.8 L516.3 779.7 L520.1 779.3 L518.7 775.8 L516.5 776.1 L514.3 775.6 L512.4 774.4 L511.2 772.7 L510.8 770.7 L511.3 768.7 L512.5 767.1 L514.4 766.0 L516.6 765.6 L518.8 765.9 L520.7 767.0 L522.1 768.7Z" fill="#dd7105" fill-rule="evenodd"/>
<path d="M489.6 821.0 L490.5 824.3 L490.1 829.8 L489.2 826.4Z" fill="#844200" stroke="#844200" stroke-width="0.4"/><path d="M490.5 824.3 L492.9 827.0 L492.6 832.4 L490.1 829.8Z" fill="#7a3d00" stroke="#7a3d00" stroke-width="0.4"/><path d="M492.9 827.0 L496.4 828.5 L496.0 833.9 L492.6 832.4Z" fill="#673400" stroke="#673400" stroke-width="0.4"/><path d="M496.4 828.5 L500.2 828.5 L499.8 834.0 L496.0 833.9ZM499.3 817.8 L497.0 817.8 L496.6 823.3 L498.9 823.3Z" fill="#5a2d00" stroke="#5a2d00" stroke-width="0.4"/><path d="M500.2 828.5 L503.6 827.0 L503.3 832.5 L499.8 834.0Z" fill="#653300" stroke="#653300" stroke-width="0.4"/><path d="M503.6 827.0 L506.0 824.4 L505.6 829.8 L503.3 832.5Z" fill="#6d3700" stroke="#6d3700" stroke-width="0.4"/><path d="M506.0 824.4 L506.8 821.0 L506.4 826.5 L505.6 829.8Z" fill="#6e3700" stroke="#6e3700" stroke-width="0.4"/><path d="M501.9 821.0 L501.2 819.1 L500.8 824.5 L501.5 826.5Z" fill="#824200" stroke="#824200" stroke-width="0.4"/><path d="M501.2 819.1 L499.3 817.8 L498.9 823.3 L500.8 824.5ZM495.1 819.0 L494.4 821.0 L494.1 826.5 L494.8 824.5Z" fill="#6f3800" stroke="#6f3800" stroke-width="0.4"/><path d="M497.0 817.8 L495.1 819.0 L494.8 824.5 L496.6 823.3Z" fill="#693500" stroke="#693500" stroke-width="0.4"/><path d="M506.8 821.0 L505.9 817.7 L503.4 815.0 L500.0 813.5 L496.1 813.5 L492.7 815.0 L490.4 817.7 L489.6 821.0 L490.5 824.3 L492.9 827.0 L496.4 828.5 L500.2 828.5 L503.6 827.0 L506.0 824.4ZM501.9 821.0 L501.2 819.1 L499.3 817.8 L497.0 817.8 L495.1 819.0 L494.4 821.0 L495.2 823.0 L497.1 824.2 L499.4 824.2 L501.2 823.0Z" fill="#dd7105" fill-rule="evenodd"/>
<path d="M576.6 743.3 L577.5 746.5 L577.0 752.1 L576.0 748.9Z" fill="#844200" stroke="#844200" stroke-width="0.4"/><path d="M577.5 746.5 L580.0 749.1 L579.4 754.7 L577.0 752.1Z" fill="#7a3d00" stroke="#7a3d00" stroke-width="0.4"/><path d="M580.0 749.1 L583.4 750.6 L582.8 756.2 L579.4 754.7Z" fill="#673400" stroke="#673400" stroke-width="0.4"/><path d="M583.4 750.6 L587.2 750.6 L586.6 756.2 L582.8 756.2ZM586.1 740.2 L583.9 740.2 L583.3 745.8 L585.5 745.8Z" fill="#5a2d00" stroke="#5a2d00" stroke-width="0.4"/><path d="M587.2 750.6 L590.6 749.2 L590.0 754.8 L586.6 756.2Z" fill="#653300" stroke="#653300" stroke-width="0.4"/><path d="M590.6 749.2 L592.8 746.6 L592.2 752.2 L590.0 754.8Z" fill="#6d3700" stroke="#6d3700" stroke-width="0.4"/><path d="M592.8 746.6 L593.6 743.3 L593.0 748.9 L592.2 752.2Z" fill="#6e3700" stroke="#6e3700" stroke-width="0.4"/><path d="M588.8 743.3 L588.0 741.4 L587.4 747.0 L588.2 748.9Z" fill="#824200" stroke="#824200" stroke-width="0.4"/><path d="M588.0 741.4 L586.1 740.2 L585.5 745.8 L587.4 747.0ZM582.0 741.4 L581.4 743.3 L580.8 748.9 L581.5 747.0Z" fill="#6f3800" stroke="#6f3800" stroke-width="0.4"/><path d="M583.9 740.2 L582.0 741.4 L581.5 747.0 L583.3 745.8Z" fill="#693500" stroke="#693500" stroke-width="0.4"/><path d="M593.6 743.3 L592.6 740.1 L590.2 737.5 L586.7 736.0 L583.0 736.0 L579.6 737.4 L577.3 740.0 L576.6 743.3 L577.5 746.5 L580.0 749.1 L583.4 750.6 L587.2 750.6 L590.6 749.2 L592.8 746.6ZM588.8 743.3 L588.0 741.4 L586.1 740.2 L583.9 740.2 L582.0 741.4 L581.4 743.3 L582.2 745.2 L584.0 746.4 L586.3 746.4 L588.1 745.2Z" fill="#dd7105" fill-rule="evenodd"/>
<path d="M584.7 802.5 L588.0 804.3 L587.4 809.7 L584.1 808.0Z" fill="#6b3600" stroke="#6b3600" stroke-width="0.4"/><path d="M588.0 804.3 L591.9 804.8 L591.2 810.3 L587.4 809.7Z" fill="#5e2f00" stroke="#5e2f00" stroke-width="0.4"/><path d="M591.9 804.8 L595.6 804.0 L594.9 809.5 L591.2 810.3ZM591.3 790.6 L593.5 791.0 L592.9 796.5 L590.6 796.1Z" fill="#5f3000" stroke="#5f3000" stroke-width="0.4"/><path d="M595.6 804.0 L598.7 802.1 L598.0 807.6 L594.9 809.5Z" fill="#683400" stroke="#683400" stroke-width="0.4"/><path d="M598.7 802.1 L600.7 799.2 L600.0 804.7 L598.0 807.6ZM600.7 799.2 L601.3 795.9 L600.6 801.4 L600.0 804.7ZM593.5 791.0 L595.4 792.2 L594.7 797.7 L592.9 796.5Z" fill="#6e3700" stroke="#6e3700" stroke-width="0.4"/><path d="M584.3 789.2 L587.1 791.9 L586.5 797.4 L583.7 794.7Z" fill="#783c00" stroke="#783c00" stroke-width="0.4"/><path d="M587.1 791.9 L589.0 790.9 L588.4 796.4 L586.5 797.4Z" fill="#673400" stroke="#673400" stroke-width="0.4"/><path d="M589.0 790.9 L591.3 790.6 L590.6 796.1 L588.4 796.4Z" fill="#5d2f00" stroke="#5d2f00" stroke-width="0.4"/><path d="M595.4 792.2 L596.7 793.9 L596.0 799.4 L594.7 797.7Z" fill="#7d3f00" stroke="#7d3f00" stroke-width="0.4"/><path d="M596.7 793.9 L597.2 795.9 L596.5 801.4 L596.0 799.4Z" fill="#844200" stroke="#844200" stroke-width="0.4"/><path d="M584.7 802.5 L588.0 804.3 L591.9 804.8 L595.6 804.0 L598.7 802.1 L600.7 799.2 L601.3 795.9 L600.4 792.5 L598.2 789.7 L595.0 787.7 L591.3 786.9 L587.5 787.4 L584.3 789.2 L587.1 791.9 L589.0 790.9 L591.3 790.6 L593.5 791.0 L595.4 792.2 L596.7 793.9 L597.2 795.9 L596.8 797.9 L595.6 799.6 L593.8 800.7 L591.6 801.2 L589.3 800.8 L587.4 799.8Z" fill="#dd7105" fill-rule="evenodd"/>
<path d="M696.2 743.7 L697.1 747.0 L696.2 752.6 L695.3 749.3Z" fill="#844200" stroke="#844200" stroke-width="0.4"/><path d="M697.1 747.0 L699.3 749.8 L698.4 755.4 L696.2 752.6Z" fill="#7d3f00" stroke="#7d3f00" stroke-width="0.4"/><path d="M699.3 749.8 L702.5 751.7 L701.6 757.3 L698.4 755.4ZM700.2 743.7 L700.6 741.7 L699.6 747.4 L699.3 749.3ZM700.6 741.7 L701.7 740.1 L700.8 745.7 L699.6 747.4Z" fill="#6e3700" stroke="#6e3700" stroke-width="0.4"/><path d="M702.5 751.7 L706.3 752.5 L705.3 758.1 L701.6 757.3ZM703.5 739.0 L705.7 738.5 L704.7 744.1 L702.6 744.6Z" fill="#5f3000" stroke="#5f3000" stroke-width="0.4"/><path d="M706.3 752.5 L710.0 752.0 L709.0 757.6 L705.3 758.1Z" fill="#5d2f00" stroke="#5d2f00" stroke-width="0.4"/><path d="M710.0 752.0 L713.2 750.3 L712.2 755.9 L709.0 757.6Z" fill="#673400" stroke="#673400" stroke-width="0.4"/><path d="M701.7 740.1 L703.5 739.0 L702.6 744.6 L700.8 745.7Z" fill="#683400" stroke="#683400" stroke-width="0.4"/><path d="M705.7 738.5 L707.9 738.8 L707.0 744.4 L704.7 744.1Z" fill="#5e2f00" stroke="#5e2f00" stroke-width="0.4"/><path d="M707.9 738.8 L709.9 739.9 L708.9 745.5 L707.0 744.4Z" fill="#6b3600" stroke="#6b3600" stroke-width="0.4"/><path d="M709.9 739.9 L712.5 737.2 L711.5 742.8 L708.9 745.5Z" fill="#6c3600" stroke="#6c3600" stroke-width="0.4"/><path d="M712.5 737.2 L709.1 735.5 L705.3 734.9 L701.7 735.7 L698.7 737.6 L696.7 740.4 L696.2 743.7 L697.1 747.0 L699.3 749.8 L702.5 751.7 L706.3 752.5 L710.0 752.0 L713.2 750.3 L710.3 747.6 L708.4 748.6 L706.2 748.9 L704.0 748.5 L702.1 747.3 L700.8 745.7 L700.2 743.7 L700.6 741.7 L701.7 740.1 L703.5 739.0 L705.7 738.5 L707.9 738.8 L709.9 739.9Z" fill="#dd7105" fill-rule="evenodd"/>
<path d="M704.8 796.3 L705.8 799.6 L704.9 805.1 L703.8 801.8Z" fill="#844200" stroke="#844200" stroke-width="0.4"/><path d="M705.8 799.6 L708.3 802.2 L707.4 807.7 L704.9 805.1Z" fill="#7a3d00" stroke="#7a3d00" stroke-width="0.4"/><path d="M708.3 802.2 L711.8 803.7 L710.9 809.2 L707.4 807.7Z" fill="#673400" stroke="#673400" stroke-width="0.4"/><path d="M711.8 803.7 L715.7 803.7 L714.7 809.2 L710.9 809.2ZM714.3 793.1 L712.0 793.1 L711.1 798.6 L713.4 798.6Z" fill="#5a2d00" stroke="#5a2d00" stroke-width="0.4"/><path d="M715.7 803.7 L719.0 802.3 L718.0 807.8 L714.7 809.2Z" fill="#653300" stroke="#653300" stroke-width="0.4"/><path d="M719.0 802.3 L721.3 799.6 L720.3 805.1 L718.0 807.8Z" fill="#6d3700" stroke="#6d3700" stroke-width="0.4"/><path d="M721.3 799.6 L721.9 796.3 L720.9 801.8 L720.3 805.1Z" fill="#6e3700" stroke="#6e3700" stroke-width="0.4"/><path d="M717.1 796.3 L716.3 794.3 L715.3 799.9 L716.1 801.8Z" fill="#824200" stroke="#824200" stroke-width="0.4"/><path d="M716.3 794.3 L714.3 793.1 L713.4 798.6 L715.3 799.9ZM710.2 794.3 L709.6 796.3 L708.7 801.8 L709.3 799.8Z" fill="#6f3800" stroke="#6f3800" stroke-width="0.4"/><path d="M712.0 793.1 L710.2 794.3 L709.3 799.8 L711.1 798.6Z" fill="#693500" stroke="#693500" stroke-width="0.4"/><path d="M721.9 796.3 L720.9 793.0 L718.4 790.4 L714.9 788.9 L711.1 788.9 L707.7 790.3 L705.5 793.0 L704.8 796.3 L705.8 799.6 L708.3 802.2 L711.8 803.7 L715.7 803.7 L719.0 802.3 L721.3 799.6ZM717.1 796.3 L716.3 794.3 L714.3 793.1 L712.0 793.1 L710.2 794.3 L709.6 796.3 L710.4 798.2 L712.4 799.4 L714.7 799.4 L716.5 798.2Z" fill="#dd7105" fill-rule="evenodd"/>
<path d="M171.2 329.5 L253.7 329.8 L254.0 336.1 L171.7 335.8Z" fill="#5a2d00" stroke="#5a2d00" stroke-width="0.4"/><path d="M253.7 329.8 L254.6 296.2 L254.9 302.6 L254.0 336.1Z" fill="#6d3700" stroke="#6d3700" stroke-width="0.4"/><path d="M171.2 329.5 L253.7 329.8 L254.6 296.2 L172.6 296.0Z" fill="#dd7105" fill-rule="evenodd"/>
<path d="M308.8 330.0 L363.8 330.2 L363.8 336.4 L308.9 336.3Z" fill="#5a2d00" stroke="#5a2d00" stroke-width="0.4"/><path d="M363.8 330.2 L364.0 296.6 L364.0 302.9 L363.8 336.4Z" fill="#6d3700" stroke="#6d3700" stroke-width="0.4"/><path d="M308.8 330.0 L363.8 330.2 L364.0 296.6 L309.3 296.4Z" fill="#dd7105" fill-rule="evenodd"/>
<path d="M418.8 330.3 L473.9 330.5 L473.6 336.8 L418.7 336.6Z" fill="#5a2d00" stroke="#5a2d00" stroke-width="0.4"/><path d="M418.7 296.8 L418.8 330.3 L418.7 336.6 L418.6 303.1Z" fill="#854300" stroke="#854300" stroke-width="0.4"/><path d="M418.8 330.3 L473.9 330.5 L473.4 297.0 L418.7 296.8Z" fill="#dd7105" fill-rule="evenodd"/>
<path d="M528.9 330.7 L583.9 330.9 L583.4 337.2 L528.5 337.0Z" fill="#5a2d00" stroke="#5a2d00" stroke-width="0.4"/><path d="M528.1 297.1 L528.9 330.7 L528.5 337.0 L527.7 303.5Z" fill="#854300" stroke="#854300" stroke-width="0.4"/><path d="M528.9 330.7 L583.9 330.9 L582.8 297.3 L528.1 297.1Z" fill="#dd7105" fill-rule="evenodd"/>
<path d="M639.0 331.1 L694.0 331.2 L693.2 337.5 L638.3 337.3Z" fill="#5a2d00" stroke="#5a2d00" stroke-width="0.4"/><path d="M637.5 297.5 L639.0 331.1 L638.3 337.3 L636.8 303.8Z" fill="#854300" stroke="#854300" stroke-width="0.4"/><path d="M639.0 331.1 L694.0 331.2 L692.2 297.7 L637.5 297.5Z" fill="#dd7105" fill-rule="evenodd"/>
<path d="M749.1 331.4 L804.2 331.6 L803.0 337.9 L748.1 337.7Z" fill="#5a2d00" stroke="#5a2d00" stroke-width="0.4"/><path d="M746.9 297.9 L749.1 331.4 L748.1 337.7 L746.0 304.2Z" fill="#854300" stroke="#854300" stroke-width="0.4"/><path d="M749.1 331.4 L804.2 331.6 L801.7 298.0 L746.9 297.9Z" fill="#dd7105" fill-rule="evenodd"/>
<path d="M859.2 331.8 L886.8 331.9 L885.4 338.2 L857.9 338.1Z" fill="#5a2d00" stroke="#5a2d00" stroke-width="0.4"/><path d="M856.4 298.2 L859.2 331.8 L857.9 338.1 L855.1 304.5Z" fill="#854300" stroke="#854300" stroke-width="0.4"/><path d="M859.2 331.8 L886.8 331.9 L883.8 298.3 L856.4 298.2Z" fill="#dd7105" fill-rule="evenodd"/>
<path d="M108.4 479.6 L136.6 479.7 L137.3 485.7 L109.1 485.6Z" fill="#5a2d00" stroke="#5a2d00" stroke-width="0.4"/><path d="M136.6 479.7 L145.3 295.9 L145.9 302.2 L137.3 485.7Z" fill="#6d3700" stroke="#6d3700" stroke-width="0.4"/><path d="M108.4 479.6 L136.6 479.7 L145.3 295.9 L117.9 295.8Z" fill="#dd7105" fill-rule="evenodd"/>
<path d="M109.8 451.5 L119.4 444.2 L120.1 450.4 L110.5 457.6ZM204.1 346.7 L201.0 349.1 L201.5 355.4 L204.5 352.9ZM311.7 340.2 L309.5 342.0 L309.7 348.2 L311.8 346.5Z" fill="#6b3600" stroke="#6b3600" stroke-width="0.4"/><path d="M119.4 444.2 L146.2 444.8 L146.8 450.9 L120.1 450.4ZM146.2 444.8 L173.1 446.0 L173.6 452.1 L146.8 450.9Z" fill="#5b2e00" stroke="#5b2e00" stroke-width="0.4"/><path d="M173.1 446.0 L199.8 447.7 L200.3 453.8 L173.6 452.1Z" fill="#5c2e00" stroke="#5c2e00" stroke-width="0.4"/><path d="M199.8 447.7 L226.5 450.0 L226.9 456.1 L200.3 453.8Z" fill="#5d2e00" stroke="#5d2e00" stroke-width="0.4"/><path d="M226.5 450.0 L253.2 452.9 L253.5 459.0 L226.9 456.1ZM212.0 344.6 L207.9 345.1 L208.3 351.4 L212.5 350.9Z" fill="#5d2f00" stroke="#5d2f00" stroke-width="0.4"/><path d="M253.2 452.9 L279.7 456.3 L280.0 462.4 L253.5 459.0ZM279.7 456.3 L306.2 460.4 L306.4 466.5 L280.0 462.4ZM216.2 345.2 L212.0 344.6 L212.5 350.9 L216.6 351.4Z" fill="#5e2f00" stroke="#5e2f00" stroke-width="0.4"/><path d="M306.2 460.4 L332.6 465.0 L332.7 471.1 L306.4 466.5ZM332.6 465.0 L358.8 470.2 L358.9 476.2 L332.7 471.1Z" fill="#5f3000" stroke="#5f3000" stroke-width="0.4"/><path d="M354.1 428.0 L364.1 384.1 L364.2 390.3 L354.1 434.2ZM201.0 349.1 L199.0 352.2 L199.5 358.4 L201.5 355.4ZM199.0 352.2 L198.2 355.6 L198.7 361.9 L199.5 358.4ZM309.5 342.0 L308.7 344.4 L308.9 350.6 L309.7 348.2Z" fill="#6e3700" stroke="#6e3700" stroke-width="0.4"/><path d="M329.1 334.0 L329.2 327.2 L329.3 333.5 L329.2 340.3ZM198.2 355.6 L196.7 397.9 L197.1 404.1 L198.7 361.9ZM196.2 409.8 L195.8 422.3 L196.2 428.4 L196.7 416.0Z" fill="#6d3700" stroke="#6d3700" stroke-width="0.4"/><path d="M225.1 355.7 L224.5 352.3 L224.9 358.5 L225.5 361.9Z" fill="#844200" stroke="#844200" stroke-width="0.4"/><path d="M224.5 352.3 L222.7 349.2 L223.1 355.4 L224.9 358.5Z" fill="#7f4000" stroke="#7f4000" stroke-width="0.4"/><path d="M222.7 349.2 L219.8 346.7 L220.2 353.0 L223.1 355.4ZM319.6 342.0 L317.5 340.2 L317.7 346.5 L319.8 348.3Z" fill="#763b00" stroke="#763b00" stroke-width="0.4"/><path d="M219.8 346.7 L216.2 345.2 L216.6 351.4 L220.2 353.0Z" fill="#683400" stroke="#683400" stroke-width="0.4"/><path d="M207.9 345.1 L204.1 346.7 L204.5 352.9 L208.3 351.4Z" fill="#653300" stroke="#653300" stroke-width="0.4"/><path d="M224.1 409.9 L196.2 409.8 L196.7 416.0 L224.5 416.1Z" fill="#5a2d00" stroke="#5a2d00" stroke-width="0.4"/><path d="M320.4 344.4 L319.6 342.0 L319.8 348.3 L320.5 350.7Z" fill="#834200" stroke="#834200" stroke-width="0.4"/><path d="M317.5 340.2 L314.6 339.6 L314.8 345.8 L317.7 346.5ZM314.6 339.6 L311.7 340.2 L311.8 346.5 L314.8 345.8Z" fill="#603000" stroke="#603000" stroke-width="0.4"/><path d="M116.3 326.5 L109.8 451.5 L119.4 444.2 L146.2 444.8 L173.1 446.0 L199.8 447.7 L226.5 450.0 L253.2 452.9 L279.7 456.3 L306.2 460.4 L332.6 465.0 L358.8 470.2 L354.1 428.0 L364.1 384.1 L363.9 366.1 L329.1 334.0 L329.2 327.2ZM196.7 397.9 L223.7 398.0 L225.1 355.7 L224.5 352.3 L222.7 349.2 L219.8 346.7 L216.2 345.2 L212.0 344.6 L207.9 345.1 L204.1 346.7 L201.0 349.1 L199.0 352.2 L198.2 355.6ZM195.8 422.3 L223.7 422.4 L224.1 409.9 L196.2 409.8ZM320.4 344.4 L319.6 342.0 L317.5 340.2 L314.6 339.6 L311.7 340.2 L309.5 342.0 L308.7 344.4 L309.4 346.8 L311.5 348.5 L314.5 349.2 L317.4 348.5 L319.6 346.8Z" fill="#dd7105" fill-rule="evenodd"/>
<path d="M419.0 388.6 L474.7 388.8 L474.4 395.0 L418.9 394.8Z" fill="#5a2d00" stroke="#5a2d00" stroke-width="0.4"/><path d="M418.8 328.9 L419.0 388.6 L418.9 394.8 L418.7 335.2Z" fill="#854300" stroke="#854300" stroke-width="0.4"/><path d="M419.0 388.6 L474.7 388.8 L473.8 329.1 L418.8 328.9Z" fill="#dd7105" fill-rule="evenodd"/>
<path d="M384.2 487.7 L438.3 501.8 L438.2 507.8 L384.2 493.8Z" fill="#613000" stroke="#613000" stroke-width="0.4"/><path d="M438.3 501.8 L477.8 389.6 L477.5 395.8 L438.2 507.8Z" fill="#6f3700" stroke="#6f3700" stroke-width="0.4"/><path d="M384.2 487.7 L438.3 501.8 L477.8 389.6 L424.7 376.1Z" fill="#dd7105" fill-rule="evenodd"/>
<path d="M531.7 448.5 L587.9 448.7 L587.3 454.8 L531.3 454.6Z" fill="#5a2d00" stroke="#5a2d00" stroke-width="0.4"/><path d="M528.9 329.3 L531.7 448.5 L531.3 454.6 L528.5 335.6Z" fill="#854300" stroke="#854300" stroke-width="0.4"/><path d="M531.7 448.5 L587.9 448.7 L583.9 329.5 L528.9 329.3Z" fill="#dd7105" fill-rule="evenodd"/>
<path d="M482.1 515.1 L534.9 533.8 L534.5 539.7 L481.8 521.1Z" fill="#643200" stroke="#643200" stroke-width="0.4"/><path d="M534.9 533.8 L573.2 451.2 L572.7 457.4 L534.5 539.7Z" fill="#6f3700" stroke="#6f3700" stroke-width="0.4"/><path d="M482.1 515.1 L534.9 533.8 L573.2 451.2 L521.0 433.1Z" fill="#dd7105" fill-rule="evenodd"/>
<path d="M644.2 448.9 L700.4 449.1 L699.5 455.2 L643.4 455.0Z" fill="#5a2d00" stroke="#5a2d00" stroke-width="0.4"/><path d="M638.9 329.6 L644.2 448.9 L643.4 455.0 L638.2 335.9Z" fill="#854300" stroke="#854300" stroke-width="0.4"/><path d="M644.2 448.9 L700.4 449.1 L694.0 329.8 L638.9 329.6Z" fill="#dd7105" fill-rule="evenodd"/>
<path d="M577.5 550.9 L628.8 574.1 L628.1 580.0 L576.9 556.8Z" fill="#693500" stroke="#693500" stroke-width="0.4"/><path d="M628.8 574.1 L700.0 452.5 L699.1 458.6 L628.1 580.0Z" fill="#6e3700" stroke="#6e3700" stroke-width="0.4"/><path d="M577.5 550.9 L628.8 574.1 L700.0 452.5 L649.5 430.2Z" fill="#dd7105" fill-rule="evenodd"/>
<path d="M756.7 450.8 L813.0 450.9 L811.8 457.0 L755.7 456.9Z" fill="#5a2d00" stroke="#5a2d00" stroke-width="0.4"/><path d="M749.0 330.0 L756.7 450.8 L755.7 456.9 L748.0 336.3Z" fill="#854300" stroke="#854300" stroke-width="0.4"/><path d="M756.7 450.8 L813.0 450.9 L804.1 330.2 L749.0 330.0Z" fill="#dd7105" fill-rule="evenodd"/>
<path d="M871.9 482.2 L900.2 482.3 L898.8 488.3 L870.5 488.2Z" fill="#5a2d00" stroke="#5a2d00" stroke-width="0.4"/><path d="M859.1 330.4 L871.9 482.2 L870.5 488.2 L857.8 336.7Z" fill="#854300" stroke="#854300" stroke-width="0.4"/><path d="M871.9 482.2 L900.2 482.3 L886.6 330.5 L859.1 330.4Z" fill="#dd7105" fill-rule="evenodd"/>
<path d="M278.5 492.0 L333.8 501.5 L333.9 507.5 L278.7 498.0Z" fill="#5f3000" stroke="#5f3000" stroke-width="0.4"/><path d="M333.8 501.5 L343.1 463.6 L343.2 469.7 L333.9 507.5Z" fill="#6e3700" stroke="#6e3700" stroke-width="0.4"/><path d="M278.5 492.0 L333.8 501.5 L343.1 463.6 L288.2 454.2Z" fill="#dd7105" fill-rule="evenodd"/>
<path d="M375.9 510.6 L430.2 524.7 L430.1 530.7 L375.9 516.6Z" fill="#613000" stroke="#613000" stroke-width="0.4"/><path d="M430.2 524.7 L443.4 487.5 L443.2 493.6 L430.1 530.7Z" fill="#6f3700" stroke="#6f3700" stroke-width="0.4"/><path d="M375.9 510.6 L430.2 524.7 L443.4 487.5 L389.3 473.5Z" fill="#dd7105" fill-rule="evenodd"/>
<path d="M471.5 537.4 L524.5 556.2 L524.1 562.1 L471.2 543.4Z" fill="#643200" stroke="#643200" stroke-width="0.4"/><path d="M524.5 556.2 L541.4 519.8 L540.9 525.8 L524.1 562.1Z" fill="#6f3700" stroke="#6f3700" stroke-width="0.4"/><path d="M471.5 537.4 L524.5 556.2 L541.4 519.8 L488.6 501.3Z" fill="#dd7105" fill-rule="evenodd"/>
<path d="M564.7 572.4 L616.1 595.8 L615.4 601.7 L564.1 578.3Z" fill="#693500" stroke="#693500" stroke-width="0.4"/><path d="M616.1 595.8 L636.7 560.6 L636.0 566.6 L615.4 601.7Z" fill="#6e3700" stroke="#6e3700" stroke-width="0.4"/><path d="M564.7 572.4 L616.1 595.8 L636.7 560.6 L585.5 537.5Z" fill="#dd7105" fill-rule="evenodd"/>
<path d="M654.9 615.5 L704.4 643.5 L703.5 649.3 L654.1 621.4ZM704.4 643.5 L728.6 609.8 L727.7 615.7 L703.5 649.3Z" fill="#6e3700" stroke="#6e3700" stroke-width="0.4"/><path d="M654.9 615.5 L704.4 643.5 L728.6 609.8 L679.3 582.2Z" fill="#dd7105" fill-rule="evenodd"/>
<path d="M654.9 615.5 L704.4 643.5 L703.5 649.3 L654.1 621.4ZM704.4 643.5 L803.3 506.0 L802.2 512.1 L703.5 649.3Z" fill="#6e3700" stroke="#6e3700" stroke-width="0.4"/><path d="M654.9 615.5 L704.4 643.5 L803.3 506.0 L754.5 479.4Z" fill="#dd7105" fill-rule="evenodd"/>
<path d="M766.9 678.9 L792.2 693.2 L791.0 698.9 L765.8 684.6ZM792.2 693.2 L907.4 528.2 L906.0 534.2 L791.0 698.9Z" fill="#6e3700" stroke="#6e3700" stroke-width="0.4"/><path d="M766.9 678.9 L792.2 693.2 L907.4 528.2 L882.6 514.7Z" fill="#dd7105" fill-rule="evenodd"/>
<path d="M817.4 510.3 L780.7 490.2 L779.6 496.2 L816.2 516.3Z" fill="#6e3700" stroke="#6e3700" stroke-width="0.4"/><path d="M780.7 490.2 L755.9 477.0 L754.9 483.1 L779.6 496.2ZM654.9 429.6 L649.8 435.7 L649.1 441.9 L654.1 435.7Z" fill="#6d3700" stroke="#6d3700" stroke-width="0.4"/><path d="M755.9 477.0 L731.0 464.3 L730.0 470.4 L754.9 483.1Z" fill="#6c3600" stroke="#6c3600" stroke-width="0.4"/><path d="M731.0 464.3 L705.8 452.2 L704.9 458.3 L730.0 470.4Z" fill="#6b3600" stroke="#6b3600" stroke-width="0.4"/><path d="M705.8 452.2 L680.4 440.6 L679.6 446.8 L704.9 458.3Z" fill="#6a3500" stroke="#6a3500" stroke-width="0.4"/><path d="M680.4 440.6 L654.9 429.6 L654.1 435.7 L679.6 446.8Z" fill="#693400" stroke="#693400" stroke-width="0.4"/><path d="M649.8 435.7 L811.9 436.3 L816.9 504.0 L817.4 510.3 L780.7 490.2 L755.9 477.0 L731.0 464.3 L705.8 452.2 L680.4 440.6 L654.9 429.6Z" fill="#dd7105" fill-rule="evenodd"/>
<path d="M158.7 625.4 L245.4 625.7 L245.8 631.5 L159.3 631.2ZM221.1 503.2 L192.1 503.1 L192.6 509.2 L221.5 509.2Z" fill="#5a2d00" stroke="#5a2d00" stroke-width="0.4"/><path d="M245.4 625.7 L250.2 446.1 L250.6 452.2 L245.8 631.5ZM192.1 503.1 L190.8 538.4 L191.3 544.3 L192.6 509.2Z" fill="#6d3700" stroke="#6d3700" stroke-width="0.4"/><path d="M158.7 625.4 L245.4 625.7 L250.2 446.1 L166.2 445.8ZM190.8 538.4 L220.0 538.5 L221.1 503.2 L192.1 503.1Z" fill="#dd7105" fill-rule="evenodd"/>
<path d="M481.2 672.1 L369.9 856.5 L369.9 861.9 L480.9 677.9Z" fill="#6e3700" stroke="#6e3700" stroke-width="0.4"/><path d="M369.9 856.5 L317.3 830.8 L317.4 836.3 L369.9 861.9Z" fill="#693500" stroke="#693500" stroke-width="0.4"/><path d="M429.7 648.0 L481.2 672.1 L369.9 856.5 L317.3 830.8Z" fill="#dd7105" fill-rule="evenodd"/>
<path d="M259.6 799.1 L390.4 627.0 L390.3 632.8 L260.0 804.6Z" fill="#6e3700" stroke="#6e3700" stroke-width="0.4"/><path d="M235.1 784.5 L259.6 799.1 L260.0 804.6 L235.5 790.0Z" fill="#6d3700" stroke="#6d3700" stroke-width="0.4"/><path d="M259.6 799.1 L390.4 627.0 L366.2 613.3 L235.1 784.5Z" fill="#dd7105" fill-rule="evenodd"/>
<path d="M550.8 699.7 L459.9 894.1 L459.7 899.4 L550.3 705.4Z" fill="#6f3700" stroke="#6f3700" stroke-width="0.4"/><path d="M459.9 894.1 L432.1 883.1 L431.9 888.5 L459.7 899.4Z" fill="#653300" stroke="#653300" stroke-width="0.4"/><path d="M432.1 883.1 L523.7 689.4 L550.8 699.7 L459.9 894.1Z" fill="#dd7105" fill-rule="evenodd"/>
<path d="M586.3 666.2 L593.1 876.4 L592.4 881.8 L585.7 672.0Z" fill="#854300" stroke="#854300" stroke-width="0.4"/><path d="M593.1 876.4 L623.3 876.6 L622.5 881.9 L592.4 881.8Z" fill="#5a2d00" stroke="#5a2d00" stroke-width="0.4"/><path d="M623.3 876.6 L615.4 666.3 L586.3 666.2 L593.1 876.4Z" fill="#dd7105" fill-rule="evenodd"/>
<path d="M683.7 876.8 L673.7 666.5 L672.9 672.3 L682.8 882.1Z" fill="#854300" stroke="#854300" stroke-width="0.4"/><path d="M713.9 876.9 L683.7 876.8 L682.8 882.1 L712.9 882.2Z" fill="#5a2d00" stroke="#5a2d00" stroke-width="0.4"/><path d="M683.7 876.8 L673.7 666.5 L702.8 666.6 L713.9 876.9Z" fill="#dd7105" fill-rule="evenodd"/>
<polygon points="118.3,409.2 117.7,406.9 115.7,405.2 113.0,404.6 110.2,405.2 108.0,406.9 107.2,409.2 107.8,411.5 109.7,413.2 112.5,413.9 115.3,413.3 117.4,411.6" fill="#5a2d00"/><polygon points="119.0,415.4 118.3,413.1 116.4,411.4 113.7,410.8 110.9,411.4 108.7,413.1 107.9,415.4 108.5,417.7 110.4,419.4 113.2,420.0 116.0,419.4 118.1,417.7" fill="#474747"/>
<polygon points="894.6,365.9 893.7,363.6 891.5,361.9 888.7,361.3 886.0,361.9 884.1,363.6 883.6,365.8 884.5,368.1 886.7,369.8 889.5,370.4 892.2,369.8 894.1,368.1" fill="#5a2d00"/><polygon points="893.2,372.1 892.3,369.8 890.1,368.2 887.3,367.5 884.6,368.1 882.8,369.8 882.2,372.1 883.2,374.3 885.3,376.0 888.1,376.6 890.8,376.0 892.7,374.4" fill="#474747"/>
<polygon points="841.3,629.8 840.4,627.3 838.1,625.5 835.2,624.8 832.3,625.5 830.3,627.3 829.8,629.8 830.7,632.3 833.0,634.2 835.9,634.8 838.8,634.2 840.8,632.3" fill="#5a2d00"/><polygon points="840.0,635.7 839.1,633.2 836.8,631.3 833.9,630.6 831.1,631.3 829.1,633.1 828.5,635.6 829.4,638.1 831.7,640.0 834.6,640.6 837.5,640.0 839.5,638.2" fill="#474747"/>
<polygon points="345.3,360.9 344.9,359.8 343.7,359.0 342.2,359.0 341.0,359.7 340.5,360.9 340.9,362.1 342.1,362.8 343.6,362.8 344.8,362.1" fill="#5a2d00"/>
<polygon points="336.1,415.8 335.6,414.6 334.4,413.8 332.9,413.8 331.7,414.6 331.2,415.8 331.6,416.9 332.9,417.7 334.4,417.7 335.6,417.0" fill="#5a2d00"/>
<polygon points="324.4,676.7 323.6,674.1 321.5,672.3 318.6,671.6 315.7,672.2 313.5,674.1 312.7,676.6 313.5,679.2 315.6,681.1 318.5,681.7 321.4,681.1 323.6,679.2" fill="#5a2d00"/><polygon points="324.5,682.4 323.8,679.9 321.7,678.0 318.8,677.3 315.9,678.0 313.7,679.8 312.9,682.4 313.6,684.9 315.7,686.8 318.6,687.5 321.6,686.8 323.7,684.9" fill="#474747"/>
<polygon points="522.7,770.8 521.8,768.2 519.6,766.3 516.6,765.6 513.7,766.3 511.6,768.2 510.8,770.8 511.7,773.4 513.9,775.4 516.8,776.1 519.8,775.4 521.9,773.5" fill="#5a2d00"/><polygon points="522.2,776.4 521.4,773.8 519.2,771.8 516.2,771.1 513.3,771.8 511.2,773.7 510.4,776.4 511.3,779.0 513.5,780.9 516.4,781.6 519.4,780.9 521.5,779.0" fill="#474747"/>
<polygon points="597.2,795.9 596.3,793.2 594.0,791.3 591.0,790.6 588.1,791.3 586.0,793.2 585.3,795.8 586.1,798.5 588.4,800.4 591.4,801.2 594.3,800.5 596.5,798.5" fill="#5a2d00"/><polygon points="596.5,801.4 595.7,798.7 593.4,796.8 590.4,796.1 587.5,796.8 585.4,798.7 584.7,801.3 585.5,804.0 587.8,805.9 590.8,806.6 593.7,805.9 595.8,804.0" fill="#474747"/>
<polygon points="712.0,743.7 711.1,741.1 708.9,739.2 705.9,738.5 703.0,739.2 700.9,741.1 700.2,743.7 701.2,746.3 703.4,748.2 706.4,748.9 709.3,748.2 711.4,746.3" fill="#5a2d00"/><polygon points="711.1,749.3 710.2,746.7 707.9,744.8 704.9,744.1 702.0,744.8 700.0,746.7 699.3,749.3 700.2,751.9 702.5,753.8 705.5,754.5 708.4,753.8 710.4,751.9" fill="#474747"/>
<path d="M129.7 338.3 L165.7 338.4 L165.8 339.4 L129.8 339.2Z" fill="#5a2d00" stroke="#5a2d00" stroke-width="0.4"/><path d="M165.7 338.4 L166.0 332.2 L166.1 333.2 L165.8 339.4Z" fill="#6d3700" stroke="#6d3700" stroke-width="0.4"/><path d="M129.7 338.3 L165.7 338.4 L166.0 332.2 L130.0 332.1Z" fill="#dd7105" fill-rule="evenodd"/>
<path d="M185.5 707.2 L186.1 709.8 L186.6 715.1 L186.0 712.5Z" fill="#a15101" stroke="#a15101" stroke-width="0.4"/><path d="M186.1 709.8 L188.0 712.0 L188.5 717.3 L186.6 715.1Z" fill="#974c00" stroke="#974c00" stroke-width="0.4"/><path d="M188.0 712.0 L190.7 713.2 L191.2 718.5 L188.5 717.3Z" fill="#8a4500" stroke="#8a4500" stroke-width="0.4"/><path d="M190.7 713.2 L193.9 713.2 L194.3 718.5 L191.2 718.5Z" fill="#824100" stroke="#824100" stroke-width="0.4"/><path d="M193.9 713.2 L196.7 712.0 L197.2 717.3 L194.3 718.5ZM198.7 709.9 L199.5 707.2 L199.9 712.5 L199.2 715.2Z" fill="#763b00" stroke="#763b00" stroke-width="0.4"/><path d="M196.7 712.0 L198.7 709.9 L199.2 715.2 L197.2 717.3Z" fill="#743a00" stroke="#743a00" stroke-width="0.4"/><path d="M199.5 707.2 L198.9 704.6 L197.0 702.4 L194.3 701.3 L191.2 701.2 L188.3 702.4 L186.3 704.5 L185.5 707.2 L186.1 709.8 L188.0 712.0 L190.7 713.2 L193.9 713.2 L196.7 712.0 L198.7 709.9Z" fill="#dd7105" fill-rule="evenodd"/>
<path d="M547.9 425.8 L549.0 428.7 L548.9 429.9 L547.9 426.9Z" fill="#834200" stroke="#834200" stroke-width="0.4"/><path d="M549.0 428.7 L551.6 430.9 L551.5 432.0 L548.9 429.9Z" fill="#763b00" stroke="#763b00" stroke-width="0.4"/><path d="M551.6 430.9 L555.1 431.6 L555.0 432.8 L551.5 432.0ZM555.1 431.6 L558.6 430.9 L558.5 432.0 L555.0 432.8Z" fill="#603000" stroke="#603000" stroke-width="0.4"/><path d="M558.6 430.9 L561.1 428.7 L561.0 429.9 L558.5 432.0Z" fill="#6b3600" stroke="#6b3600" stroke-width="0.4"/><path d="M561.1 428.7 L561.9 425.8 L561.8 427.0 L561.0 429.9Z" fill="#6e3700" stroke="#6e3700" stroke-width="0.4"/><path d="M557.7 425.8 L556.9 424.2 L556.8 425.3 L557.6 427.0Z" fill="#814100" stroke="#814100" stroke-width="0.4"/><path d="M556.9 424.2 L554.9 423.5 L554.8 424.6 L556.8 425.3Z" fill="#643200" stroke="#643200" stroke-width="0.4"/><path d="M554.9 423.5 L552.9 424.2 L552.8 425.3 L554.8 424.6Z" fill="#633200" stroke="#633200" stroke-width="0.4"/><path d="M552.9 424.2 L552.1 425.8 L552.0 427.0 L552.8 425.3Z" fill="#6f3700" stroke="#6f3700" stroke-width="0.4"/><path d="M561.9 425.8 L560.9 422.9 L558.3 420.8 L554.8 420.0 L551.3 420.8 L548.8 422.9 L547.9 425.8 L549.0 428.7 L551.6 430.9 L555.1 431.6 L558.6 430.9 L561.1 428.7ZM557.7 425.8 L556.9 424.2 L554.9 423.5 L552.9 424.2 L552.1 425.8 L553.0 427.5 L555.0 428.1 L557.0 427.5Z" fill="#dd7105" fill-rule="evenodd" stroke="#b96000" stroke-width="0.8"/>
<ellipse cx="536.2" cy="575.3" rx="6.1" ry="5.2" fill="#623100"/><ellipse cx="536.5" cy="570.9" rx="6.1" ry="5.2" fill="#dd7105"/>
<ellipse cx="131.0" cy="307.0" rx="8.2" ry="6.7" fill="#623100"/><ellipse cx="130.7" cy="304.0" rx="8.2" ry="6.7" fill="#dd7105"/>
<ellipse cx="128.8" cy="352.0" rx="8.3" ry="6.8" fill="#623100"/><ellipse cx="128.5" cy="349.0" rx="8.3" ry="6.8" fill="#dd7105"/>
<ellipse cx="127.7" cy="374.7" rx="8.3" ry="6.9" fill="#623100"/><ellipse cx="127.4" cy="371.8" rx="8.3" ry="6.9" fill="#dd7105"/>
<ellipse cx="126.6" cy="397.7" rx="8.3" ry="6.9" fill="#623100"/><ellipse cx="126.2" cy="394.8" rx="8.3" ry="6.9" fill="#dd7105"/>
<ellipse cx="125.4" cy="420.9" rx="8.4" ry="7.0" fill="#623100"/><ellipse cx="125.1" cy="418.0" rx="8.4" ry="7.0" fill="#dd7105"/>
<ellipse cx="123.1" cy="467.8" rx="8.4" ry="7.1" fill="#623100"/><ellipse cx="122.8" cy="464.9" rx="8.4" ry="7.1" fill="#dd7105"/>
<ellipse cx="185.8" cy="307.2" rx="8.2" ry="6.7" fill="#623100"/><ellipse cx="185.6" cy="304.2" rx="8.2" ry="6.7" fill="#dd7105"/>
<ellipse cx="240.6" cy="307.3" rx="8.2" ry="6.7" fill="#623100"/><ellipse cx="240.5" cy="304.4" rx="8.2" ry="6.7" fill="#dd7105"/>
<ellipse cx="322.8" cy="307.6" rx="8.2" ry="6.7" fill="#623100"/><ellipse cx="322.8" cy="304.6" rx="8.2" ry="6.7" fill="#dd7105"/>
<ellipse cx="350.2" cy="307.7" rx="8.2" ry="6.7" fill="#623100"/><ellipse cx="350.2" cy="304.7" rx="8.2" ry="6.7" fill="#dd7105"/>
<ellipse cx="432.4" cy="308.0" rx="8.2" ry="6.7" fill="#623100"/><ellipse cx="432.5" cy="305.0" rx="8.2" ry="6.7" fill="#dd7105"/>
<ellipse cx="459.8" cy="308.1" rx="8.2" ry="6.7" fill="#623100"/><ellipse cx="460.0" cy="305.1" rx="8.2" ry="6.7" fill="#dd7105"/>
<ellipse cx="542.1" cy="308.3" rx="8.2" ry="6.7" fill="#623100"/><ellipse cx="542.3" cy="305.3" rx="8.2" ry="6.7" fill="#dd7105"/>
<ellipse cx="569.5" cy="308.4" rx="8.2" ry="6.7" fill="#623100"/><ellipse cx="569.7" cy="305.4" rx="8.2" ry="6.7" fill="#dd7105"/>
<ellipse cx="651.7" cy="308.7" rx="8.2" ry="6.7" fill="#623100"/><ellipse cx="652.1" cy="305.7" rx="8.2" ry="6.7" fill="#dd7105"/>
<ellipse cx="679.1" cy="308.8" rx="8.2" ry="6.7" fill="#623100"/><ellipse cx="679.5" cy="305.8" rx="8.2" ry="6.7" fill="#dd7105"/>
<ellipse cx="761.4" cy="309.0" rx="8.2" ry="6.7" fill="#623100"/><ellipse cx="761.8" cy="306.1" rx="8.2" ry="6.7" fill="#dd7105"/>
<ellipse cx="788.8" cy="309.1" rx="8.2" ry="6.7" fill="#623100"/><ellipse cx="789.3" cy="306.2" rx="8.2" ry="6.7" fill="#dd7105"/>
<ellipse cx="871.0" cy="309.4" rx="8.2" ry="6.7" fill="#623100"/><ellipse cx="871.7" cy="306.4" rx="8.2" ry="6.7" fill="#dd7105"/>
<ellipse cx="543.3" cy="353.3" rx="8.3" ry="6.8" fill="#623100"/><ellipse cx="543.5" cy="350.4" rx="8.3" ry="6.8" fill="#dd7105"/>
<ellipse cx="570.9" cy="353.4" rx="8.3" ry="6.8" fill="#623100"/><ellipse cx="571.1" cy="350.5" rx="8.3" ry="6.8" fill="#dd7105"/>
<ellipse cx="571.6" cy="376.2" rx="8.3" ry="6.9" fill="#623100"/><ellipse cx="571.8" cy="373.3" rx="8.3" ry="6.9" fill="#dd7105"/>
<ellipse cx="510.9" cy="486.6" rx="8.5" ry="7.1" fill="#623100"/><ellipse cx="511.1" cy="483.8" rx="8.5" ry="7.1" fill="#dd7105"/>
<ellipse cx="537.2" cy="495.9" rx="8.5" ry="7.2" fill="#623100"/><ellipse cx="537.4" cy="493.0" rx="8.5" ry="7.2" fill="#dd7105"/>
<ellipse cx="521.2" cy="464.8" rx="8.4" ry="7.1" fill="#623100"/><ellipse cx="521.4" cy="461.9" rx="8.4" ry="7.1" fill="#dd7105"/>
<ellipse cx="764.4" cy="354.1" rx="8.3" ry="6.8" fill="#623100"/><ellipse cx="764.9" cy="351.1" rx="8.3" ry="6.8" fill="#dd7105"/>
<ellipse cx="765.9" cy="376.9" rx="8.3" ry="6.9" fill="#623100"/><ellipse cx="766.4" cy="373.9" rx="8.3" ry="6.9" fill="#dd7105"/>
<ellipse cx="767.4" cy="399.8" rx="8.4" ry="6.9" fill="#623100"/><ellipse cx="767.9" cy="396.9" rx="8.4" ry="6.9" fill="#dd7105"/>
<ellipse cx="769.0" cy="423.0" rx="8.4" ry="7.0" fill="#623100"/><ellipse cx="769.5" cy="420.1" rx="8.4" ry="7.0" fill="#dd7105"/>
<ellipse cx="792.0" cy="354.2" rx="8.3" ry="6.8" fill="#623100"/><ellipse cx="792.5" cy="351.2" rx="8.3" ry="6.8" fill="#dd7105"/>
<ellipse cx="793.6" cy="377.0" rx="8.3" ry="6.9" fill="#623100"/><ellipse cx="794.2" cy="374.0" rx="8.3" ry="6.9" fill="#dd7105"/>
<ellipse cx="795.3" cy="399.9" rx="8.4" ry="6.9" fill="#623100"/><ellipse cx="795.8" cy="397.0" rx="8.4" ry="6.9" fill="#dd7105"/>
<ellipse cx="796.9" cy="423.1" rx="8.4" ry="7.0" fill="#623100"/><ellipse cx="797.5" cy="420.2" rx="8.4" ry="7.0" fill="#dd7105"/>
<ellipse cx="800.3" cy="470.1" rx="8.5" ry="7.1" fill="#623100"/><ellipse cx="800.9" cy="467.2" rx="8.5" ry="7.1" fill="#dd7105"/>
<ellipse cx="874.9" cy="354.4" rx="8.3" ry="6.8" fill="#623100"/><ellipse cx="875.6" cy="351.5" rx="8.3" ry="6.8" fill="#dd7105"/>
<ellipse cx="876.9" cy="377.2" rx="8.3" ry="6.9" fill="#623100"/><ellipse cx="877.6" cy="374.3" rx="8.3" ry="6.9" fill="#dd7105"/>
<ellipse cx="878.9" cy="400.2" rx="8.4" ry="6.9" fill="#623100"/><ellipse cx="879.6" cy="397.3" rx="8.4" ry="6.9" fill="#dd7105"/>
<ellipse cx="880.9" cy="423.4" rx="8.4" ry="7.0" fill="#623100"/><ellipse cx="881.6" cy="420.5" rx="8.4" ry="7.0" fill="#dd7105"/>
<ellipse cx="885.0" cy="470.3" rx="8.5" ry="7.1" fill="#623100"/><ellipse cx="885.7" cy="467.5" rx="8.5" ry="7.1" fill="#dd7105"/>
<ellipse cx="295.3" cy="482.7" rx="8.5" ry="7.1" fill="#623100"/><ellipse cx="295.2" cy="479.8" rx="8.5" ry="7.1" fill="#dd7105"/>
<ellipse cx="322.9" cy="487.4" rx="8.5" ry="7.1" fill="#623100"/><ellipse cx="322.8" cy="484.6" rx="8.5" ry="7.1" fill="#dd7105"/>
<ellipse cx="393.6" cy="502.6" rx="8.5" ry="7.2" fill="#623100"/><ellipse cx="393.6" cy="499.8" rx="8.5" ry="7.2" fill="#dd7105"/>
<ellipse cx="420.7" cy="509.7" rx="8.5" ry="7.2" fill="#623100"/><ellipse cx="420.8" cy="506.9" rx="8.5" ry="7.2" fill="#dd7105"/>
<ellipse cx="490.0" cy="530.9" rx="8.5" ry="7.3" fill="#623100"/><ellipse cx="490.1" cy="528.1" rx="8.5" ry="7.3" fill="#dd7105"/>
<ellipse cx="516.5" cy="540.3" rx="8.6" ry="7.3" fill="#623100"/><ellipse cx="516.7" cy="537.5" rx="8.6" ry="7.3" fill="#dd7105"/>
<ellipse cx="583.9" cy="567.4" rx="8.6" ry="7.3" fill="#623100"/><ellipse cx="584.2" cy="564.6" rx="8.6" ry="7.3" fill="#dd7105"/>
<ellipse cx="609.6" cy="579.1" rx="8.6" ry="7.4" fill="#623100"/><ellipse cx="609.9" cy="576.3" rx="8.6" ry="7.4" fill="#dd7105"/>
<ellipse cx="674.7" cy="612.2" rx="8.7" ry="7.5" fill="#623100"/><ellipse cx="675.1" cy="609.4" rx="8.7" ry="7.5" fill="#dd7105"/>
<ellipse cx="699.5" cy="626.1" rx="8.7" ry="7.5" fill="#623100"/><ellipse cx="699.9" cy="623.4" rx="8.7" ry="7.5" fill="#dd7105"/>
<ellipse cx="704.6" cy="571.2" rx="8.6" ry="7.4" fill="#623100"/><ellipse cx="705.0" cy="568.4" rx="8.6" ry="7.4" fill="#dd7105"/>
<ellipse cx="719.4" cy="550.9" rx="8.6" ry="7.3" fill="#623100"/><ellipse cx="719.8" cy="548.1" rx="8.6" ry="7.3" fill="#dd7105"/>
<ellipse cx="734.1" cy="530.8" rx="8.5" ry="7.3" fill="#623100"/><ellipse cx="734.5" cy="528.0" rx="8.5" ry="7.3" fill="#dd7105"/>
<ellipse cx="748.6" cy="510.8" rx="8.5" ry="7.2" fill="#623100"/><ellipse cx="749.1" cy="508.0" rx="8.5" ry="7.2" fill="#dd7105"/>
<ellipse cx="729.2" cy="584.9" rx="8.6" ry="7.4" fill="#623100"/><ellipse cx="729.7" cy="582.2" rx="8.6" ry="7.4" fill="#dd7105"/>
<ellipse cx="744.0" cy="564.6" rx="8.6" ry="7.3" fill="#623100"/><ellipse cx="744.4" cy="561.8" rx="8.6" ry="7.3" fill="#dd7105"/>
<ellipse cx="758.6" cy="544.3" rx="8.6" ry="7.3" fill="#623100"/><ellipse cx="759.1" cy="541.5" rx="8.6" ry="7.3" fill="#dd7105"/>
<ellipse cx="773.1" cy="524.3" rx="8.5" ry="7.2" fill="#623100"/><ellipse cx="773.6" cy="521.4" rx="8.5" ry="7.2" fill="#dd7105"/>
<ellipse cx="787.0" cy="675.5" rx="8.8" ry="7.6" fill="#623100"/><ellipse cx="787.5" cy="672.8" rx="8.8" ry="7.6" fill="#dd7105"/>
<ellipse cx="816.3" cy="633.6" rx="8.7" ry="7.5" fill="#623100"/><ellipse cx="816.9" cy="630.8" rx="8.7" ry="7.5" fill="#dd7105"/>
<ellipse cx="830.9" cy="612.8" rx="8.7" ry="7.5" fill="#623100"/><ellipse cx="831.5" cy="610.1" rx="8.7" ry="7.5" fill="#dd7105"/>
<ellipse cx="845.3" cy="592.3" rx="8.6" ry="7.4" fill="#623100"/><ellipse cx="845.9" cy="589.5" rx="8.6" ry="7.4" fill="#dd7105"/>
<ellipse cx="859.6" cy="571.9" rx="8.6" ry="7.4" fill="#623100"/><ellipse cx="860.3" cy="569.1" rx="8.6" ry="7.4" fill="#dd7105"/>
<ellipse cx="888.0" cy="531.4" rx="8.5" ry="7.3" fill="#623100"/><ellipse cx="888.7" cy="528.6" rx="8.5" ry="7.3" fill="#dd7105"/>
<ellipse cx="178.4" cy="491.7" rx="8.5" ry="7.2" fill="#623100"/><ellipse cx="178.1" cy="488.9" rx="8.5" ry="7.2" fill="#dd7105"/>
<ellipse cx="177.4" cy="515.7" rx="8.5" ry="7.2" fill="#623100"/><ellipse cx="177.2" cy="512.9" rx="8.5" ry="7.2" fill="#dd7105"/>
<ellipse cx="176.5" cy="539.8" rx="8.6" ry="7.3" fill="#623100"/><ellipse cx="176.2" cy="537.0" rx="8.6" ry="7.3" fill="#dd7105"/>
<ellipse cx="234.9" cy="491.9" rx="8.5" ry="7.2" fill="#623100"/><ellipse cx="234.7" cy="489.1" rx="8.5" ry="7.2" fill="#dd7105"/>
<ellipse cx="234.2" cy="515.9" rx="8.5" ry="7.2" fill="#623100"/><ellipse cx="234.0" cy="513.1" rx="8.5" ry="7.2" fill="#dd7105"/>
<ellipse cx="233.5" cy="540.0" rx="8.6" ry="7.3" fill="#623100"/><ellipse cx="233.3" cy="537.2" rx="8.6" ry="7.3" fill="#dd7105"/>
<ellipse cx="435.8" cy="665.1" rx="8.7" ry="7.6" fill="#623100"/><ellipse cx="435.9" cy="662.4" rx="8.7" ry="7.6" fill="#dd7105"/>
<ellipse cx="408.3" cy="710.1" rx="8.8" ry="7.7" fill="#623100"/><ellipse cx="408.3" cy="707.4" rx="8.8" ry="7.7" fill="#dd7105"/>
<ellipse cx="394.4" cy="732.8" rx="8.9" ry="7.8" fill="#623100"/><ellipse cx="394.4" cy="730.1" rx="8.9" ry="7.8" fill="#dd7105"/>
<ellipse cx="380.3" cy="755.7" rx="8.9" ry="7.8" fill="#623100"/><ellipse cx="380.3" cy="753.0" rx="8.9" ry="7.8" fill="#dd7105"/>
<ellipse cx="366.2" cy="778.7" rx="8.9" ry="7.9" fill="#623100"/><ellipse cx="366.2" cy="776.1" rx="8.9" ry="7.9" fill="#dd7105"/>
<ellipse cx="337.6" cy="825.4" rx="9.0" ry="8.0" fill="#623100"/><ellipse cx="337.6" cy="822.9" rx="9.0" ry="8.0" fill="#dd7105"/>
<ellipse cx="461.6" cy="677.3" rx="8.8" ry="7.6" fill="#623100"/><ellipse cx="461.7" cy="674.6" rx="8.8" ry="7.6" fill="#dd7105"/>
<ellipse cx="434.2" cy="722.4" rx="8.8" ry="7.8" fill="#623100"/><ellipse cx="434.3" cy="719.7" rx="8.8" ry="7.8" fill="#dd7105"/>
<ellipse cx="420.4" cy="745.2" rx="8.9" ry="7.8" fill="#623100"/><ellipse cx="420.4" cy="742.5" rx="8.9" ry="7.8" fill="#dd7105"/>
<ellipse cx="406.4" cy="768.2" rx="8.9" ry="7.9" fill="#623100"/><ellipse cx="406.4" cy="765.5" rx="8.9" ry="7.9" fill="#dd7105"/>
<ellipse cx="392.3" cy="791.3" rx="8.9" ry="7.9" fill="#623100"/><ellipse cx="392.4" cy="788.7" rx="8.9" ry="7.9" fill="#dd7105"/>
<ellipse cx="363.9" cy="838.2" rx="9.0" ry="8.1" fill="#623100"/><ellipse cx="363.9" cy="835.7" rx="9.0" ry="8.1" fill="#dd7105"/>
<ellipse cx="255.8" cy="780.8" rx="8.9" ry="7.9" fill="#623100"/><ellipse cx="255.6" cy="778.2" rx="8.9" ry="7.9" fill="#dd7105"/>
<ellipse cx="289.1" cy="737.0" rx="8.9" ry="7.8" fill="#623100"/><ellipse cx="289.0" cy="734.4" rx="8.9" ry="7.8" fill="#dd7105"/>
<ellipse cx="305.6" cy="715.4" rx="8.8" ry="7.7" fill="#623100"/><ellipse cx="305.5" cy="712.8" rx="8.8" ry="7.7" fill="#dd7105"/>
<ellipse cx="321.9" cy="694.0" rx="8.8" ry="7.7" fill="#623100"/><ellipse cx="321.9" cy="691.3" rx="8.8" ry="7.7" fill="#dd7105"/>
<ellipse cx="338.2" cy="672.7" rx="8.8" ry="7.6" fill="#623100"/><ellipse cx="338.1" cy="670.0" rx="8.8" ry="7.6" fill="#dd7105"/>
<ellipse cx="370.3" cy="630.6" rx="8.7" ry="7.5" fill="#623100"/><ellipse cx="370.3" cy="627.8" rx="8.7" ry="7.5" fill="#dd7105"/>
<ellipse cx="451.9" cy="876.1" rx="9.1" ry="8.2" fill="#623100"/><ellipse cx="452.0" cy="873.6" rx="9.1" ry="8.2" fill="#dd7105"/>
<ellipse cx="475.2" cy="826.6" rx="9.0" ry="8.0" fill="#623100"/><ellipse cx="475.3" cy="824.0" rx="9.0" ry="8.0" fill="#dd7105"/>
<ellipse cx="486.6" cy="802.1" rx="9.0" ry="8.0" fill="#623100"/><ellipse cx="486.8" cy="799.6" rx="9.0" ry="8.0" fill="#dd7105"/>
<ellipse cx="498.0" cy="777.9" rx="8.9" ry="7.9" fill="#623100"/><ellipse cx="498.2" cy="775.3" rx="8.9" ry="7.9" fill="#dd7105"/>
<ellipse cx="509.4" cy="753.8" rx="8.9" ry="7.8" fill="#623100"/><ellipse cx="509.5" cy="751.2" rx="8.9" ry="7.8" fill="#dd7105"/>
<ellipse cx="531.7" cy="706.3" rx="8.8" ry="7.7" fill="#623100"/><ellipse cx="531.9" cy="703.7" rx="8.8" ry="7.7" fill="#dd7105"/>
<ellipse cx="607.7" cy="862.9" rx="9.0" ry="8.1" fill="#623100"/><ellipse cx="608.0" cy="860.4" rx="9.0" ry="8.1" fill="#dd7105"/>
<ellipse cx="605.8" cy="809.2" rx="9.0" ry="8.0" fill="#623100"/><ellipse cx="606.1" cy="806.6" rx="9.0" ry="8.0" fill="#dd7105"/>
<ellipse cx="604.9" cy="782.7" rx="8.9" ry="7.9" fill="#623100"/><ellipse cx="605.2" cy="780.1" rx="8.9" ry="7.9" fill="#dd7105"/>
<ellipse cx="604.0" cy="756.4" rx="8.9" ry="7.8" fill="#623100"/><ellipse cx="604.3" cy="753.8" rx="8.9" ry="7.8" fill="#dd7105"/>
<ellipse cx="603.1" cy="730.4" rx="8.8" ry="7.8" fill="#623100"/><ellipse cx="603.4" cy="727.7" rx="8.8" ry="7.8" fill="#dd7105"/>
<ellipse cx="601.3" cy="679.0" rx="8.8" ry="7.6" fill="#623100"/><ellipse cx="601.6" cy="676.3" rx="8.8" ry="7.6" fill="#dd7105"/>
<ellipse cx="698.1" cy="863.2" rx="9.1" ry="8.1" fill="#623100"/><ellipse cx="698.5" cy="860.7" rx="9.1" ry="8.1" fill="#dd7105"/>
<ellipse cx="695.4" cy="809.5" rx="9.0" ry="8.0" fill="#623100"/><ellipse cx="695.8" cy="806.9" rx="9.0" ry="8.0" fill="#dd7105"/>
<ellipse cx="694.1" cy="783.0" rx="8.9" ry="7.9" fill="#623100"/><ellipse cx="694.5" cy="780.4" rx="8.9" ry="7.9" fill="#dd7105"/>
<ellipse cx="692.8" cy="756.7" rx="8.9" ry="7.8" fill="#623100"/><ellipse cx="693.2" cy="754.1" rx="8.9" ry="7.8" fill="#dd7105"/>
<ellipse cx="691.5" cy="730.7" rx="8.9" ry="7.8" fill="#623100"/><ellipse cx="691.9" cy="728.0" rx="8.9" ry="7.8" fill="#dd7105"/>
<ellipse cx="688.9" cy="679.3" rx="8.8" ry="7.6" fill="#623100"/><ellipse cx="689.3" cy="676.6" rx="8.8" ry="7.6" fill="#dd7105"/>
<path d="M184.7 609.1 L220.8 609.2 L221.2 614.4 L185.1 614.2Z" fill="#b45b00" stroke="#b45b00" stroke-width="0.4"/><path d="M220.8 609.2 L222.7 549.1 L223.1 554.3 L221.2 614.4Z" fill="#984c00" stroke="#984c00" stroke-width="0.4"/><path d="M184.7 609.1 L220.8 609.2 L222.7 549.1 L221.3 551.8 L217.3 554.0 L211.4 555.5 L204.6 556.0 L197.7 555.5 L192.0 553.9 L188.2 551.6 L186.9 549.0Z" fill="#dd7105" fill-rule="evenodd" stroke="#b96000" stroke-width="0.8"/>
<path d="M586.2 522.2 L591.4 524.4 L590.8 530.8 L585.6 528.6Z" fill="#b05901" stroke="#b05901" stroke-width="0.4"/><path d="M591.4 524.4 L597.7 513.1 L597.1 519.5 L590.8 530.8Z" fill="#904800" stroke="#904800" stroke-width="0.4"/><path d="M586.2 522.2 L591.4 524.4 L597.7 513.1 L592.5 510.9Z" fill="#dd7105" fill-rule="evenodd"/>
<path d="M645.8 549.0 L640.7 546.6 L639.9 552.9 L645.0 555.3Z" fill="#b15901" stroke="#b15901" stroke-width="0.4"/><path d="M652.8 537.9 L645.8 549.0 L645.0 555.3 L651.9 544.3Z" fill="#914900" stroke="#914900" stroke-width="0.4"/><path d="M645.8 549.0 L640.7 546.6 L647.6 535.5 L652.8 537.9Z" fill="#dd7105" fill-rule="evenodd"/>
<path d="M648.1 545.3 L645.8 549.0 L645.0 555.3 L647.3 551.7Z" fill="#914900" stroke="#914900" stroke-width="0.4"/><path d="M645.8 549.0 L638.4 545.5 L637.6 551.8 L645.0 555.3ZM638.4 545.5 L631.0 542.0 L630.2 548.3 L637.6 551.8Z" fill="#b15901" stroke="#b15901" stroke-width="0.4"/><path d="M631.0 542.0 L623.6 538.6 L622.9 544.9 L630.2 548.3ZM623.6 538.6 L616.2 535.2 L615.4 541.6 L622.9 544.9ZM616.2 535.2 L608.7 531.9 L608.0 538.2 L615.4 541.6ZM608.7 531.9 L601.2 528.6 L600.6 535.0 L608.0 538.2ZM601.2 528.6 L593.8 525.4 L593.1 531.8 L600.6 535.0ZM593.8 525.4 L586.2 522.2 L585.6 528.6 L593.1 531.8Z" fill="#b05901" stroke="#b05901" stroke-width="0.4"/><path d="M588.3 518.4 L595.9 521.6 L603.4 524.8 L610.9 528.1 L618.4 531.4 L625.8 534.8 L633.3 538.3 L640.7 541.8 L648.1 545.3 L645.8 549.0 L638.4 545.5 L631.0 542.0 L623.6 538.6 L616.2 535.2 L608.7 531.9 L601.2 528.6 L593.8 525.4 L586.2 522.2Z" fill="#dd7105" fill-rule="evenodd"/>
<path d="M116.0 320.3 L329.2 321.0 L329.5 333.7 L117.4 333.0Z" fill="#5a2d00" stroke="#5a2d00" stroke-width="0.4"/><path d="M329.2 321.0 L329.3 313.7 L329.5 326.4 L329.5 333.7Z" fill="#6d3700" stroke="#6d3700" stroke-width="0.4"/><path d="M116.0 320.3 L329.2 321.0 L329.3 313.7 L116.4 313.0Z" fill="#dd7105" fill-rule="evenodd"/>
<path d="M100.8 320.3 L116.0 320.3 L117.4 333.0 L102.3 333.0Z" fill="#5a2d00" stroke="#5a2d00" stroke-width="0.4"/><path d="M116.0 320.3 L116.2 316.4 L117.6 329.1 L117.4 333.0Z" fill="#6d3700" stroke="#6d3700" stroke-width="0.4"/><path d="M100.8 320.3 L116.0 320.3 L116.2 316.4 L101.0 316.3Z" fill="#dd7105" fill-rule="evenodd"/>
<path d="M329.2 321.0 L889.8 322.9 L887.1 335.5 L329.5 333.7Z" fill="#5a2d00" stroke="#5a2d00" stroke-width="0.4"/><path d="M329.2 321.0 L889.8 322.9 L889.2 315.5 L329.3 313.7Z" fill="#dd7105" fill-rule="evenodd"/>
<path d="M889.8 322.9 L905.0 322.9 L902.2 335.6 L887.1 335.5Z" fill="#5a2d00" stroke="#5a2d00" stroke-width="0.4"/><path d="M889.5 318.9 L889.8 322.9 L887.1 335.5 L886.8 331.6Z" fill="#854300" stroke="#854300" stroke-width="0.4"/><path d="M889.8 322.9 L905.0 322.9 L904.7 319.0 L889.5 318.9Z" fill="#dd7105" fill-rule="evenodd"/>
<path d="M303.1 436.3 L640.0 437.5 L638.6 449.8 L303.4 448.6Z" fill="#5a2d00" stroke="#5a2d00" stroke-width="0.4"/><path d="M303.1 436.3 L640.0 437.5 L639.7 429.8 L303.2 428.7Z" fill="#dd7105" fill-rule="evenodd"/>
<path d="M706.5 437.7 L900.2 438.3 L897.4 450.6 L704.7 450.0Z" fill="#5a2d00" stroke="#5a2d00" stroke-width="0.4"/><path d="M706.0 430.0 L706.5 437.7 L704.7 450.0 L704.3 442.4Z" fill="#854300" stroke="#854300" stroke-width="0.4"/><path d="M706.5 437.7 L900.2 438.3 L899.5 430.7 L706.0 430.0Z" fill="#dd7105" fill-rule="evenodd"/>
<path d="M900.2 438.3 L915.8 438.4 L912.8 450.7 L897.4 450.6Z" fill="#5a2d00" stroke="#5a2d00" stroke-width="0.4"/><path d="M899.9 434.2 L900.2 438.3 L897.4 450.6 L897.0 446.5Z" fill="#854300" stroke="#854300" stroke-width="0.4"/><path d="M900.2 438.3 L915.8 438.4 L915.4 434.3 L899.9 434.2Z" fill="#dd7105" fill-rule="evenodd"/>
<path d="M94.5 435.6 L111.1 435.7 L112.5 448.0 L96.0 448.0Z" fill="#5a2d00" stroke="#5a2d00" stroke-width="0.4"/><path d="M111.1 435.7 L111.5 428.0 L112.9 440.4 L112.5 448.0Z" fill="#6d3700" stroke="#6d3700" stroke-width="0.4"/><path d="M94.5 435.6 L111.1 435.7 L111.5 428.0 L94.9 428.0Z" fill="#dd7105" fill-rule="evenodd"/>
<path d="M108.6 435.7 L135.5 436.1 L136.8 448.4 L110.0 448.0Z" fill="#5b2d00" stroke="#5b2d00" stroke-width="0.4"/><path d="M135.5 436.1 L162.4 437.0 L163.6 449.3 L136.8 448.4Z" fill="#5b2e00" stroke="#5b2e00" stroke-width="0.4"/><path d="M162.4 437.0 L189.3 438.5 L190.3 450.9 L163.6 449.3ZM189.3 438.5 L216.1 440.7 L216.9 453.0 L190.3 450.9Z" fill="#5c2e00" stroke="#5c2e00" stroke-width="0.4"/><path d="M216.1 440.7 L242.8 443.3 L243.5 455.6 L216.9 453.0ZM242.8 443.3 L269.4 446.6 L270.0 458.9 L243.5 455.6Z" fill="#5d2f00" stroke="#5d2f00" stroke-width="0.4"/><path d="M269.4 446.6 L296.0 450.4 L296.4 462.7 L270.0 458.9Z" fill="#5e2f00" stroke="#5e2f00" stroke-width="0.4"/><path d="M296.0 450.4 L322.5 454.9 L322.7 467.1 L296.4 462.7Z" fill="#5f2f00" stroke="#5f2f00" stroke-width="0.4"/><path d="M322.5 454.9 L348.8 459.8 L348.9 472.1 L322.7 467.1Z" fill="#5f3000" stroke="#5f3000" stroke-width="0.4"/><path d="M348.8 459.8 L375.1 465.4 L375.1 477.6 L348.9 472.1ZM375.1 465.4 L401.2 471.6 L401.0 483.8 L375.1 477.6Z" fill="#603000" stroke="#603000" stroke-width="0.4"/><path d="M401.2 471.6 L427.2 478.3 L426.9 490.5 L401.0 483.8Z" fill="#613000" stroke="#613000" stroke-width="0.4"/><path d="M427.2 478.3 L453.0 485.6 L452.6 497.7 L426.9 490.5Z" fill="#613100" stroke="#613100" stroke-width="0.4"/><path d="M453.0 485.6 L478.7 493.4 L478.1 505.6 L452.6 497.7Z" fill="#623100" stroke="#623100" stroke-width="0.4"/><path d="M478.7 493.4 L504.3 501.9 L503.5 514.0 L478.1 505.6Z" fill="#633200" stroke="#633200" stroke-width="0.4"/><path d="M504.3 501.9 L529.6 510.9 L528.8 523.0 L503.5 514.0Z" fill="#643200" stroke="#643200" stroke-width="0.4"/><path d="M529.6 510.9 L554.8 520.5 L553.8 532.5 L528.8 523.0Z" fill="#663300" stroke="#663300" stroke-width="0.4"/><path d="M554.8 520.5 L579.8 530.7 L578.6 542.7 L553.8 532.5Z" fill="#673400" stroke="#673400" stroke-width="0.4"/><path d="M579.8 530.7 L604.6 541.4 L603.3 553.4 L578.6 542.7Z" fill="#683400" stroke="#683400" stroke-width="0.4"/><path d="M604.6 541.4 L629.1 552.7 L627.7 564.6 L603.3 553.4Z" fill="#693500" stroke="#693500" stroke-width="0.4"/><path d="M629.1 552.7 L653.5 564.6 L651.9 576.5 L627.7 564.6Z" fill="#6b3500" stroke="#6b3500" stroke-width="0.4"/><path d="M653.5 564.6 L677.6 577.0 L675.9 588.9 L651.9 576.5Z" fill="#6c3600" stroke="#6c3600" stroke-width="0.4"/><path d="M677.6 577.0 L701.4 590.0 L699.6 601.9 L675.9 588.9Z" fill="#6d3700" stroke="#6d3700" stroke-width="0.4"/><path d="M701.4 590.0 L813.1 652.6 L810.6 664.2 L699.6 601.9ZM813.1 652.6 L817.9 645.8 L815.4 657.4 L810.6 664.2Z" fill="#6e3700" stroke="#6e3700" stroke-width="0.4"/><path d="M108.6 435.7 L135.5 436.1 L162.4 437.0 L189.3 438.5 L216.1 440.7 L242.8 443.3 L269.4 446.6 L296.0 450.4 L322.5 454.9 L348.8 459.8 L375.1 465.4 L401.2 471.6 L427.2 478.3 L453.0 485.6 L478.7 493.4 L504.3 501.9 L529.6 510.9 L554.8 520.5 L579.8 530.7 L604.6 541.4 L629.1 552.7 L653.5 564.6 L677.6 577.0 L701.4 590.0 L813.1 652.6 L817.9 645.8 L706.3 583.3 L682.3 570.3 L658.0 557.7 L633.4 545.8 L608.7 534.4 L583.7 523.6 L558.5 513.4 L533.1 503.7 L507.6 494.6 L481.9 486.1 L456.0 478.2 L429.9 470.9 L403.7 464.1 L377.4 457.9 L351.0 452.3 L324.4 447.3 L297.8 442.9 L271.0 439.0 L244.2 435.7 L217.2 433.0 L190.3 430.9 L163.2 429.4 L136.1 428.4 L109.0 428.0Z" fill="#dd7105" fill-rule="evenodd"/>
<path d="M813.1 652.6 L827.1 660.4 L824.5 672.0 L810.6 664.2ZM827.1 660.4 L829.7 656.7 L827.1 668.3 L824.5 672.0Z" fill="#6e3700" stroke="#6e3700" stroke-width="0.4"/><path d="M813.1 652.6 L827.1 660.4 L829.7 656.7 L815.7 648.9Z" fill="#dd7105" fill-rule="evenodd"/>
<path d="M327.4 337.1 L356.3 341.9 L356.4 354.5 L327.6 349.7Z" fill="#5f2f00" stroke="#5f2f00" stroke-width="0.4"/><path d="M356.3 341.9 L385.2 347.3 L385.1 359.9 L356.4 354.5Z" fill="#5f3000" stroke="#5f3000" stroke-width="0.4"/><path d="M385.2 347.3 L413.9 353.4 L413.7 366.0 L385.1 359.9ZM413.9 353.4 L442.6 360.0 L442.2 372.6 L413.7 366.0Z" fill="#603000" stroke="#603000" stroke-width="0.4"/><path d="M442.6 360.0 L471.1 367.3 L470.5 379.8 L442.2 372.6ZM471.1 367.3 L499.4 375.2 L498.7 387.7 L470.5 379.8Z" fill="#613100" stroke="#613100" stroke-width="0.4"/><path d="M499.4 375.2 L527.6 383.7 L526.8 396.1 L498.7 387.7Z" fill="#623100" stroke="#623100" stroke-width="0.4"/><path d="M527.6 383.7 L555.6 392.8 L554.7 405.2 L526.8 396.1Z" fill="#633200" stroke="#633200" stroke-width="0.4"/><path d="M555.6 392.8 L583.5 402.5 L582.4 414.9 L554.7 405.2Z" fill="#643200" stroke="#643200" stroke-width="0.4"/><path d="M583.5 402.5 L611.2 412.8 L609.9 425.2 L582.4 414.9Z" fill="#663300" stroke="#663300" stroke-width="0.4"/><path d="M611.2 412.8 L638.7 423.7 L637.3 436.1 L609.9 425.2Z" fill="#673400" stroke="#673400" stroke-width="0.4"/><path d="M638.7 423.7 L642.5 416.9 L641.0 429.3 L637.3 436.1Z" fill="#6e3700" stroke="#6e3700" stroke-width="0.4"/><path d="M327.4 337.1 L356.3 341.9 L385.2 347.3 L413.9 353.4 L442.6 360.0 L471.1 367.3 L499.4 375.2 L527.6 383.7 L555.6 392.8 L583.5 402.5 L611.2 412.8 L638.7 423.7 L642.5 416.9 L614.8 405.9 L586.9 395.5 L558.9 385.8 L530.6 376.6 L502.3 368.1 L473.7 360.2 L445.0 352.9 L416.2 346.2 L387.3 340.1 L358.3 334.7 L329.1 329.8Z" fill="#dd7105" fill-rule="evenodd"/>
<path d="M659.5 432.4 L682.9 442.8 L681.3 455.1 L657.9 444.8Z" fill="#693500" stroke="#693500" stroke-width="0.4"/><path d="M682.9 442.8 L706.3 453.6 L704.5 465.8 L681.3 455.1Z" fill="#6a3500" stroke="#6a3500" stroke-width="0.4"/><path d="M706.3 453.6 L729.4 464.8 L727.5 477.0 L704.5 465.8Z" fill="#6b3600" stroke="#6b3600" stroke-width="0.4"/><path d="M729.4 464.8 L752.4 476.5 L750.3 488.7 L727.5 477.0Z" fill="#6c3600" stroke="#6c3600" stroke-width="0.4"/><path d="M752.4 476.5 L775.1 488.7 L773.0 500.8 L750.3 488.7Z" fill="#6d3700" stroke="#6d3700" stroke-width="0.4"/><path d="M775.1 488.7 L885.6 549.1 L882.8 561.0 L773.0 500.8ZM885.6 549.1 L890.2 542.5 L887.4 554.4 L882.8 561.0Z" fill="#6e3700" stroke="#6e3700" stroke-width="0.4"/><path d="M659.5 432.4 L682.9 442.8 L706.3 453.6 L729.4 464.8 L752.4 476.5 L775.1 488.7 L885.6 549.1 L890.2 542.5 L779.8 482.2 L756.9 470.0 L733.8 458.2 L710.5 446.9 L687.0 436.1 L663.4 425.7Z" fill="#dd7105" fill-rule="evenodd"/>
<path d="M885.6 549.1 L899.4 556.6 L896.5 568.5 L882.8 561.0ZM899.4 556.6 L901.9 553.0 L899.0 565.0 L896.5 568.5Z" fill="#6e3700" stroke="#6e3700" stroke-width="0.4"/><path d="M885.6 549.1 L899.4 556.6 L901.9 553.0 L888.1 545.5Z" fill="#dd7105" fill-rule="evenodd"/>
<path d="M343.0 638.4 L362.4 649.5 L362.5 661.1 L343.1 650.0Z" fill="#6d3700" stroke="#6d3700" stroke-width="0.4"/><path d="M362.4 649.5 L382.2 660.3 L382.1 671.8 L362.5 661.1Z" fill="#6c3600" stroke="#6c3600" stroke-width="0.4"/><path d="M382.2 660.3 L402.3 670.7 L402.2 682.3 L382.1 671.8Z" fill="#6b3600" stroke="#6b3600" stroke-width="0.4"/><path d="M402.3 670.7 L422.8 680.9 L422.5 692.4 L402.2 682.3Z" fill="#6a3500" stroke="#6a3500" stroke-width="0.4"/><path d="M422.8 680.9 L443.5 690.6 L443.1 702.1 L422.5 692.4Z" fill="#693500" stroke="#693500" stroke-width="0.4"/><path d="M443.5 690.6 L464.6 700.1 L464.0 711.5 L443.1 702.1Z" fill="#683400" stroke="#683400" stroke-width="0.4"/><path d="M464.6 700.1 L485.9 709.1 L485.2 720.5 L464.0 711.5Z" fill="#673400" stroke="#673400" stroke-width="0.4"/><path d="M485.9 709.1 L507.5 717.8 L506.7 729.2 L485.2 720.5Z" fill="#663300" stroke="#663300" stroke-width="0.4"/><path d="M507.5 717.8 L529.3 726.2 L528.5 737.5 L506.7 729.2Z" fill="#653300" stroke="#653300" stroke-width="0.4"/><path d="M529.3 726.2 L532.9 718.4 L532.0 729.7 L528.5 737.5Z" fill="#6f3700" stroke="#6f3700" stroke-width="0.4"/><path d="M343.0 638.4 L362.4 649.5 L382.2 660.3 L402.3 670.7 L422.8 680.9 L443.5 690.6 L464.6 700.1 L485.9 709.1 L507.5 717.8 L529.3 726.2 L532.9 718.4 L511.3 710.2 L489.9 701.5 L468.7 692.6 L447.9 683.3 L427.3 673.6 L407.1 663.6 L387.2 653.2 L367.6 642.5 L348.3 631.6Z" fill="#dd7105" fill-rule="evenodd"/>
<path d="M329.7 630.5 L336.3 634.4 L336.5 646.1 L329.9 642.2ZM336.3 634.4 L343.0 638.4 L343.1 650.0 L336.5 646.1ZM343.0 638.4 L345.8 634.7 L346.0 646.3 L343.1 650.0Z" fill="#6e3700" stroke="#6e3700" stroke-width="0.4"/><path d="M329.7 630.5 L336.3 634.4 L343.0 638.4 L345.8 634.7 L339.2 630.8 L332.6 626.9Z" fill="#dd7105" fill-rule="evenodd"/>
<path d="M529.3 726.2 L537.0 729.0 L536.0 740.3 L528.5 737.5ZM537.0 729.0 L544.6 731.7 L543.7 743.0 L536.0 740.3Z" fill="#643200" stroke="#643200" stroke-width="0.4"/><path d="M544.6 731.7 L546.5 727.5 L545.5 738.8 L543.7 743.0Z" fill="#6f3700" stroke="#6f3700" stroke-width="0.4"/><path d="M529.3 726.2 L537.0 729.0 L544.6 731.7 L546.5 727.5 L538.9 724.8 L531.3 722.0Z" fill="#dd7105" fill-rule="evenodd"/>
<path d="M257.6 744.2 L280.2 757.5 L280.7 768.7 L258.2 755.5Z" fill="#6d3700" stroke="#6d3700" stroke-width="0.4"/><path d="M280.2 757.5 L303.2 770.5 L303.6 781.6 L280.7 768.7Z" fill="#6c3600" stroke="#6c3600" stroke-width="0.4"/><path d="M303.2 770.5 L326.7 783.0 L327.0 794.1 L303.6 781.6Z" fill="#6b3600" stroke="#6b3600" stroke-width="0.4"/><path d="M326.7 783.0 L350.6 795.2 L350.7 806.2 L327.0 794.1Z" fill="#6a3500" stroke="#6a3500" stroke-width="0.4"/><path d="M350.6 795.2 L374.9 806.9 L374.8 817.9 L350.7 806.2Z" fill="#693500" stroke="#693500" stroke-width="0.4"/><path d="M374.9 806.9 L399.5 818.2 L399.3 829.2 L374.8 817.9Z" fill="#683400" stroke="#683400" stroke-width="0.4"/><path d="M399.5 818.2 L424.5 829.1 L424.2 840.0 L399.3 829.2Z" fill="#673400" stroke="#673400" stroke-width="0.4"/><path d="M424.5 829.1 L449.8 839.5 L449.4 850.4 L424.2 840.0Z" fill="#663300" stroke="#663300" stroke-width="0.4"/><path d="M449.8 839.5 L475.5 849.5 L474.9 860.3 L449.4 850.4Z" fill="#653300" stroke="#653300" stroke-width="0.4"/><path d="M475.5 849.5 L479.2 841.4 L478.6 852.2 L474.9 860.3Z" fill="#6f3700" stroke="#6f3700" stroke-width="0.4"/><path d="M257.6 744.2 L280.2 757.5 L303.2 770.5 L326.7 783.0 L350.6 795.2 L374.9 806.9 L399.5 818.2 L424.5 829.1 L449.8 839.5 L475.5 849.5 L479.2 841.4 L453.7 831.5 L428.6 821.2 L403.8 810.4 L379.4 799.2 L355.4 787.6 L331.7 775.6 L308.4 763.2 L285.5 750.3 L263.1 737.2Z" fill="#dd7105" fill-rule="evenodd"/>
<path d="M244.2 736.0 L250.9 740.1 L251.5 751.4 L244.9 747.3ZM250.9 740.1 L257.6 744.2 L258.2 755.5 L251.5 751.4ZM257.6 744.2 L260.5 740.4 L261.2 751.7 L258.2 755.5Z" fill="#6e3700" stroke="#6e3700" stroke-width="0.4"/><path d="M244.2 736.0 L250.9 740.1 L257.6 744.2 L260.5 740.4 L253.9 736.4 L247.2 732.3Z" fill="#dd7105" fill-rule="evenodd"/>
<path d="M475.5 849.5 L483.3 852.4 L482.6 863.2 L474.9 860.3ZM483.3 852.4 L491.0 855.3 L490.4 866.1 L482.6 863.2Z" fill="#643200" stroke="#643200" stroke-width="0.4"/><path d="M491.0 855.3 L493.0 850.9 L492.3 861.7 L490.4 866.1Z" fill="#6f3700" stroke="#6f3700" stroke-width="0.4"/><path d="M475.5 849.5 L483.3 852.4 L491.0 855.3 L493.0 850.9 L485.2 848.0 L477.5 845.1Z" fill="#dd7105" fill-rule="evenodd"/>
<path d="M591.8 697.3 L647.9 697.5 L646.4 708.9 L590.6 708.7ZM647.9 697.5 L704.0 697.7 L702.1 709.1 L646.4 708.9Z" fill="#5a2d00" stroke="#5a2d00" stroke-width="0.4"/><path d="M591.6 688.9 L591.8 697.3 L590.6 708.7 L590.3 700.3Z" fill="#854300" stroke="#854300" stroke-width="0.4"/><path d="M591.8 697.3 L647.9 697.5 L704.0 697.7 L703.6 689.3 L647.6 689.1 L591.6 688.9Z" fill="#dd7105" fill-rule="evenodd"/>
<path d="M575.6 697.2 L583.7 697.2 L582.5 708.7 L574.5 708.6ZM583.7 697.2 L591.8 697.3 L590.6 708.7 L582.5 708.7Z" fill="#5a2d00" stroke="#5a2d00" stroke-width="0.4"/><path d="M575.5 692.7 L575.6 697.2 L574.5 708.6 L574.3 704.1Z" fill="#854300" stroke="#854300" stroke-width="0.4"/><path d="M575.6 697.2 L583.7 697.2 L591.8 697.3 L591.7 692.8 L583.6 692.7 L575.5 692.7Z" fill="#dd7105" fill-rule="evenodd"/>
<path d="M704.0 697.7 L712.1 697.7 L710.2 709.1 L702.1 709.1ZM712.1 697.7 L720.2 697.7 L718.3 709.1 L710.2 709.1Z" fill="#5a2d00" stroke="#5a2d00" stroke-width="0.4"/><path d="M703.8 693.1 L704.0 697.7 L702.1 709.1 L701.9 704.6Z" fill="#854300" stroke="#854300" stroke-width="0.4"/><path d="M704.0 697.7 L712.1 697.7 L720.2 697.7 L720.0 693.2 L711.9 693.2 L703.8 693.1Z" fill="#dd7105" fill-rule="evenodd"/>
<path d="M596.2 829.3 L653.5 829.5 L651.9 840.5 L594.9 840.3ZM653.5 829.5 L710.9 829.7 L709.0 840.7 L651.9 840.5Z" fill="#5a2d00" stroke="#5a2d00" stroke-width="0.4"/><path d="M595.9 820.6 L596.2 829.3 L594.9 840.3 L594.6 831.5Z" fill="#854300" stroke="#854300" stroke-width="0.4"/><path d="M596.2 829.3 L653.5 829.5 L710.9 829.7 L710.4 821.0 L653.2 820.8 L595.9 820.6Z" fill="#dd7105" fill-rule="evenodd"/>
<path d="M579.6 829.3 L587.9 829.3 L586.7 840.2 L578.4 840.2ZM587.9 829.3 L596.2 829.3 L594.9 840.3 L586.7 840.2Z" fill="#5a2d00" stroke="#5a2d00" stroke-width="0.4"/><path d="M579.4 824.6 L579.6 829.3 L578.4 840.2 L578.3 835.5Z" fill="#854300" stroke="#854300" stroke-width="0.4"/><path d="M579.6 829.3 L587.9 829.3 L596.2 829.3 L596.0 824.6 L587.7 824.6 L579.4 824.6Z" fill="#dd7105" fill-rule="evenodd"/>
<path d="M710.9 829.7 L719.2 829.8 L717.2 840.7 L709.0 840.7ZM719.2 829.8 L727.5 829.8 L725.5 840.7 L717.2 840.7Z" fill="#5a2d00" stroke="#5a2d00" stroke-width="0.4"/><path d="M710.7 825.0 L710.9 829.7 L709.0 840.7 L708.7 836.0Z" fill="#854300" stroke="#854300" stroke-width="0.4"/><path d="M710.9 829.7 L719.2 829.8 L727.5 829.8 L727.2 825.1 L719.0 825.1 L710.7 825.0Z" fill="#dd7105" fill-rule="evenodd"/>
<path d="M329.3 337.0 L888.5 338.9 L888.2 339.9 L329.3 338.1Z" fill="#5a2d00" stroke="#5a2d00" stroke-width="0.4"/><path d="M329.3 337.0 L888.5 338.9 L887.9 332.1 L329.4 330.2Z" fill="#dd7105" fill-rule="evenodd"/>
<polygon points="877.8,322.8 905.0,322.9 900.7,341.2 875.9,341.1" fill="#ab5600"/>
<path d="M303.2 452.4 L639.3 453.5 L639.1 454.5 L303.3 453.4Z" fill="#5a2d00" stroke="#5a2d00" stroke-width="0.4"/><path d="M303.2 452.4 L639.3 453.5 L638.9 446.4 L303.3 445.3Z" fill="#dd7105" fill-rule="evenodd"/>
<path d="M705.5 453.7 L898.8 454.4 L898.6 455.4 L705.4 454.8Z" fill="#5a2d00" stroke="#5a2d00" stroke-width="0.4"/><path d="M705.2 446.6 L705.5 453.7 L705.4 454.8 L705.0 447.7Z" fill="#854300" stroke="#854300" stroke-width="0.4"/><path d="M705.5 453.7 L898.8 454.4 L898.2 447.3 L705.2 446.6Z" fill="#dd7105" fill-rule="evenodd"/>
<polygon points="887.9,438.3 915.8,438.4 911.3,456.6 886.0,456.5" fill="#ab5600"/>
<path d="M109.3 451.7 L135.9 452.1 L136.0 453.1 L109.4 452.8Z" fill="#5b2d00" stroke="#5b2d00" stroke-width="0.4"/><path d="M135.9 452.1 L162.5 453.0 L162.6 454.1 L136.0 453.1Z" fill="#5b2e00" stroke="#5b2e00" stroke-width="0.4"/><path d="M162.5 453.0 L189.1 454.5 L189.2 455.6 L162.6 454.1ZM189.1 454.5 L215.6 456.6 L215.7 457.7 L189.2 455.6Z" fill="#5c2e00" stroke="#5c2e00" stroke-width="0.4"/><path d="M215.6 456.6 L242.0 459.3 L242.1 460.4 L215.7 457.7ZM242.0 459.3 L268.4 462.5 L268.4 463.6 L242.1 460.4Z" fill="#5d2f00" stroke="#5d2f00" stroke-width="0.4"/><path d="M268.4 462.5 L294.7 466.4 L294.7 467.4 L268.4 463.6Z" fill="#5e2f00" stroke="#5e2f00" stroke-width="0.4"/><path d="M294.7 466.4 L320.8 470.7 L320.9 471.8 L294.7 467.4Z" fill="#5f2f00" stroke="#5f2f00" stroke-width="0.4"/><path d="M320.8 470.7 L346.9 475.7 L346.9 476.7 L320.9 471.8Z" fill="#5f3000" stroke="#5f3000" stroke-width="0.4"/><path d="M346.9 475.7 L372.9 481.2 L372.9 482.3 L346.9 476.7ZM372.9 481.2 L398.7 487.3 L398.7 488.3 L372.9 482.3Z" fill="#603000" stroke="#603000" stroke-width="0.4"/><path d="M398.7 487.3 L424.4 494.0 L424.4 495.0 L398.7 488.3Z" fill="#613000" stroke="#613000" stroke-width="0.4"/><path d="M424.4 494.0 L450.0 501.2 L450.0 502.2 L424.4 495.0Z" fill="#613100" stroke="#613100" stroke-width="0.4"/><path d="M450.0 501.2 L475.4 509.0 L475.4 510.1 L450.0 502.2Z" fill="#623100" stroke="#623100" stroke-width="0.4"/><path d="M475.4 509.0 L500.7 517.4 L500.6 518.4 L475.4 510.1Z" fill="#633200" stroke="#633200" stroke-width="0.4"/><path d="M500.7 517.4 L525.7 526.3 L525.7 527.4 L500.6 518.4Z" fill="#643200" stroke="#643200" stroke-width="0.4"/><path d="M525.7 526.3 L550.6 535.8 L550.6 536.9 L525.7 527.4Z" fill="#663300" stroke="#663300" stroke-width="0.4"/><path d="M550.6 535.8 L575.3 545.9 L575.3 547.0 L550.6 536.9Z" fill="#673400" stroke="#673400" stroke-width="0.4"/><path d="M575.3 545.9 L599.9 556.6 L599.7 557.6 L575.3 547.0Z" fill="#683400" stroke="#683400" stroke-width="0.4"/><path d="M599.9 556.6 L624.1 567.8 L624.0 568.8 L599.7 557.6Z" fill="#693500" stroke="#693500" stroke-width="0.4"/><path d="M624.1 567.8 L648.2 579.6 L648.1 580.6 L624.0 568.8Z" fill="#6b3500" stroke="#6b3500" stroke-width="0.4"/><path d="M648.2 579.6 L672.0 591.9 L671.9 592.9 L648.1 580.6Z" fill="#6c3600" stroke="#6c3600" stroke-width="0.4"/><path d="M672.0 591.9 L695.6 604.8 L695.5 605.8 L671.9 592.9Z" fill="#6d3700" stroke="#6d3700" stroke-width="0.4"/><path d="M695.6 604.8 L806.9 667.4 L806.7 668.4 L695.5 605.8ZM806.9 667.4 L811.3 661.0 L811.1 662.0 L806.7 668.4Z" fill="#6e3700" stroke="#6e3700" stroke-width="0.4"/><path d="M109.3 451.7 L135.9 452.1 L162.5 453.0 L189.1 454.5 L215.6 456.6 L242.0 459.3 L268.4 462.5 L294.7 466.4 L320.8 470.7 L346.9 475.7 L372.9 481.2 L398.7 487.3 L424.4 494.0 L450.0 501.2 L475.4 509.0 L500.7 517.4 L525.7 526.3 L550.6 535.8 L575.3 545.9 L599.9 556.6 L624.1 567.8 L648.2 579.6 L672.0 591.9 L695.6 604.8 L806.9 667.4 L811.3 661.0 L700.1 598.6 L676.4 585.7 L652.4 573.2 L628.1 561.4 L603.6 550.1 L579.0 539.4 L554.1 529.3 L529.0 519.7 L503.7 510.7 L478.3 502.3 L452.7 494.4 L427.0 487.1 L401.1 480.4 L375.1 474.3 L348.9 468.8 L322.7 463.8 L296.3 459.4 L269.8 455.5 L243.3 452.3 L216.7 449.6 L190.0 447.5 L163.2 446.0 L136.5 445.0 L109.6 444.6Z" fill="#dd7105" fill-rule="evenodd"/>
<path d="M325.9 353.0 L354.6 357.8 L354.6 358.8 L326.0 354.0Z" fill="#5f2f00" stroke="#5f2f00" stroke-width="0.4"/><path d="M354.6 357.8 L383.2 363.2 L383.2 364.2 L354.6 358.8Z" fill="#5f3000" stroke="#5f3000" stroke-width="0.4"/><path d="M383.2 363.2 L411.7 369.2 L411.7 370.2 L383.2 364.2ZM411.7 369.2 L440.0 375.8 L440.0 376.8 L411.7 370.2Z" fill="#603000" stroke="#603000" stroke-width="0.4"/><path d="M440.0 375.8 L468.2 383.0 L468.2 384.1 L440.0 376.8ZM468.2 383.0 L496.3 390.8 L496.2 391.9 L468.2 384.1Z" fill="#613100" stroke="#613100" stroke-width="0.4"/><path d="M496.3 390.8 L524.2 399.2 L524.2 400.3 L496.2 391.9Z" fill="#623100" stroke="#623100" stroke-width="0.4"/><path d="M524.2 399.2 L552.0 408.3 L551.9 409.3 L524.2 400.3Z" fill="#633200" stroke="#633200" stroke-width="0.4"/><path d="M552.0 408.3 L579.6 417.9 L579.5 419.0 L551.9 409.3Z" fill="#643200" stroke="#643200" stroke-width="0.4"/><path d="M579.6 417.9 L607.0 428.1 L606.9 429.2 L579.5 419.0Z" fill="#663300" stroke="#663300" stroke-width="0.4"/><path d="M607.0 428.1 L634.2 439.0 L634.1 440.0 L606.9 429.2Z" fill="#673400" stroke="#673400" stroke-width="0.4"/><path d="M634.2 439.0 L637.6 432.7 L637.5 433.8 L634.1 440.0Z" fill="#6e3700" stroke="#6e3700" stroke-width="0.4"/><path d="M325.9 353.0 L354.6 357.8 L383.2 363.2 L411.7 369.2 L440.0 375.8 L468.2 383.0 L496.3 390.8 L524.2 399.2 L552.0 408.3 L579.6 417.9 L607.0 428.1 L634.2 439.0 L637.6 432.7 L610.3 421.8 L582.7 411.5 L554.9 401.8 L527.0 392.7 L498.9 384.3 L470.7 376.4 L442.3 369.2 L413.8 362.5 L385.2 356.5 L356.4 351.1 L327.5 346.3Z" fill="#dd7105" fill-rule="evenodd"/>
<path d="M654.8 447.6 L678.0 457.9 L677.8 459.0 L654.6 448.7Z" fill="#693500" stroke="#693500" stroke-width="0.4"/><path d="M678.0 457.9 L701.1 468.6 L700.9 469.7 L677.8 459.0Z" fill="#6a3500" stroke="#6a3500" stroke-width="0.4"/><path d="M701.1 468.6 L724.0 479.8 L723.8 480.8 L700.9 469.7Z" fill="#6b3600" stroke="#6b3600" stroke-width="0.4"/><path d="M724.0 479.8 L746.7 491.4 L746.5 492.5 L723.8 480.8Z" fill="#6c3600" stroke="#6c3600" stroke-width="0.4"/><path d="M746.7 491.4 L769.2 503.5 L769.0 504.5 L746.5 492.5Z" fill="#6d3700" stroke="#6d3700" stroke-width="0.4"/><path d="M769.2 503.5 L879.3 563.8 L879.0 564.9 L769.0 504.5ZM879.3 563.8 L883.5 557.8 L883.3 558.8 L879.0 564.9Z" fill="#6e3700" stroke="#6e3700" stroke-width="0.4"/><path d="M654.8 447.6 L678.0 457.9 L701.1 468.6 L724.0 479.8 L746.7 491.4 L769.2 503.5 L879.3 563.8 L883.5 557.8 L773.5 497.5 L750.9 485.4 L728.0 473.7 L704.9 462.5 L681.7 451.7 L658.4 441.4Z" fill="#dd7105" fill-rule="evenodd"/>
<path d="M338.2 653.1 L357.7 664.3 L357.7 665.3 L338.2 654.1Z" fill="#6d3700" stroke="#6d3700" stroke-width="0.4"/><path d="M357.7 664.3 L377.6 675.2 L377.6 676.2 L357.7 665.3Z" fill="#6c3600" stroke="#6c3600" stroke-width="0.4"/><path d="M377.6 675.2 L397.8 685.7 L397.8 686.7 L377.6 676.2Z" fill="#6b3600" stroke="#6b3600" stroke-width="0.4"/><path d="M397.8 685.7 L418.3 695.9 L418.3 696.9 L397.8 686.7Z" fill="#6a3500" stroke="#6a3500" stroke-width="0.4"/><path d="M418.3 695.9 L439.2 705.8 L439.1 706.8 L418.3 696.9Z" fill="#693500" stroke="#693500" stroke-width="0.4"/><path d="M439.2 705.8 L460.3 715.3 L460.3 716.3 L439.1 706.8Z" fill="#683400" stroke="#683400" stroke-width="0.4"/><path d="M460.3 715.3 L481.8 724.4 L481.7 725.4 L460.3 716.3Z" fill="#673400" stroke="#673400" stroke-width="0.4"/><path d="M481.8 724.4 L503.5 733.2 L503.4 734.2 L481.7 725.4Z" fill="#663300" stroke="#663300" stroke-width="0.4"/><path d="M503.5 733.2 L525.4 741.6 L525.3 742.6 L503.4 734.2Z" fill="#653300" stroke="#653300" stroke-width="0.4"/><path d="M525.4 741.6 L528.7 734.4 L528.6 735.4 L525.3 742.6Z" fill="#6f3700" stroke="#6f3700" stroke-width="0.4"/><path d="M338.2 653.1 L357.7 664.3 L377.6 675.2 L397.8 685.7 L418.3 695.9 L439.2 705.8 L460.3 715.3 L481.8 724.4 L503.5 733.2 L525.4 741.6 L528.7 734.4 L506.9 726.1 L485.4 717.4 L464.2 708.4 L443.2 699.0 L422.6 689.2 L402.2 679.1 L382.2 668.7 L362.5 657.9 L343.1 646.8Z" fill="#dd7105" fill-rule="evenodd"/>
<path d="M252.9 758.9 L275.6 772.3 L275.7 773.3 L253.0 759.9Z" fill="#6d3700" stroke="#6d3700" stroke-width="0.4"/><path d="M275.6 772.3 L298.8 785.4 L298.8 786.3 L275.7 773.3Z" fill="#6c3600" stroke="#6c3600" stroke-width="0.4"/><path d="M298.8 785.4 L322.3 798.0 L322.4 798.9 L298.8 786.3Z" fill="#6b3600" stroke="#6b3600" stroke-width="0.4"/><path d="M322.3 798.0 L346.3 810.2 L346.3 811.2 L322.4 798.9Z" fill="#6a3500" stroke="#6a3500" stroke-width="0.4"/><path d="M346.3 810.2 L370.6 822.0 L370.6 823.0 L346.3 811.2Z" fill="#693500" stroke="#693500" stroke-width="0.4"/><path d="M370.6 822.0 L395.4 833.4 L395.4 834.4 L370.6 823.0Z" fill="#683400" stroke="#683400" stroke-width="0.4"/><path d="M395.4 833.4 L420.5 844.4 L420.4 845.3 L395.4 834.4Z" fill="#673400" stroke="#673400" stroke-width="0.4"/><path d="M420.5 844.4 L445.9 854.9 L445.9 855.8 L420.4 845.3Z" fill="#663300" stroke="#663300" stroke-width="0.4"/><path d="M445.9 854.9 L471.7 864.9 L471.6 865.8 L445.9 855.8Z" fill="#653300" stroke="#653300" stroke-width="0.4"/><path d="M471.7 864.9 L475.1 857.4 L475.0 858.3 L471.6 865.8Z" fill="#6f3700" stroke="#6f3700" stroke-width="0.4"/><path d="M252.9 758.9 L275.6 772.3 L298.8 785.4 L322.3 798.0 L346.3 810.2 L370.6 822.0 L395.4 833.4 L420.5 844.4 L445.9 854.9 L471.7 864.9 L475.1 857.4 L449.5 847.5 L424.3 837.1 L399.4 826.2 L374.8 814.9 L350.7 803.2 L326.9 791.1 L303.5 778.6 L280.6 765.7 L258.0 752.4Z" fill="#dd7105" fill-rule="evenodd"/>
<path d="M591.2 713.3 L647.1 713.5 L647.0 714.5 L591.1 714.3ZM647.1 713.5 L703.0 713.7 L702.9 714.7 L647.0 714.5Z" fill="#5a2d00" stroke="#5a2d00" stroke-width="0.4"/><path d="M590.9 705.6 L591.2 713.3 L591.1 714.3 L590.8 706.6Z" fill="#854300" stroke="#854300" stroke-width="0.4"/><path d="M591.2 713.3 L647.1 713.5 L703.0 713.7 L702.6 706.0 L646.8 705.8 L590.9 705.6Z" fill="#dd7105" fill-rule="evenodd"/>
<path d="M595.5 845.4 L652.7 845.6 L652.6 846.5 L595.4 846.3ZM652.7 845.6 L709.9 845.8 L709.7 846.7 L652.6 846.5Z" fill="#5a2d00" stroke="#5a2d00" stroke-width="0.4"/><path d="M595.3 837.3 L595.5 845.4 L595.4 846.3 L595.1 838.2Z" fill="#854300" stroke="#854300" stroke-width="0.4"/><path d="M595.5 845.4 L652.7 845.6 L709.9 845.8 L709.5 837.7 L652.4 837.5 L595.3 837.3Z" fill="#dd7105" fill-rule="evenodd"/>
<path d="M639.4 326.0 L640.2 344.4 L639.3 353.1 L638.5 334.7Z" fill="#b15a02" stroke="#b15a02" stroke-width="0.4"/><path d="M640.2 344.4 L646.1 344.4 L645.1 353.1 L639.3 353.1Z" fill="#974c00" stroke="#974c00" stroke-width="0.4"/><path d="M639.4 326.0 L640.2 344.4 L646.1 344.4 L645.3 326.0Z" fill="#dd7105" fill-rule="evenodd"/>
<path d="M690.6 326.2 L691.6 344.6 L690.4 353.3 L689.4 334.9Z" fill="#b15a02" stroke="#b15a02" stroke-width="0.4"/><path d="M691.6 344.6 L697.4 344.6 L696.3 353.3 L690.4 353.3Z" fill="#974c00" stroke="#974c00" stroke-width="0.4"/><path d="M690.6 326.2 L691.6 344.6 L697.4 344.6 L696.4 326.2Z" fill="#dd7105" fill-rule="evenodd"/>
<polygon points="331.5,631.6 352.1,643.7 347.4,660.5 326.7,648.4" fill="#ab5600"/>
<polygon points="519.0,722.3 542.5,731.0 538.5,748.5 514.9,739.7" fill="#ab5600"/>
<polygon points="246.0,737.2 266.8,749.7 262.3,766.5 241.5,753.8" fill="#ab5600"/>
<polygon points="464.9,845.5 488.9,854.5 485.0,871.8 461.0,862.8" fill="#ab5600"/>
<polygon points="692.9,697.6 718.0,697.7 716.7,715.8 691.7,715.7" fill="#ab5600"/>
<polygon points="699.6,829.7 725.2,829.8 723.8,847.8 698.3,847.7" fill="#ab5600"/>
<path d="M645.9 332.9 L691.2 333.1 L689.9 343.3 L644.7 343.2Z" fill="#5a2d00" stroke="#5a2d00" stroke-width="0.4"/><path d="M645.5 324.4 L645.9 332.9 L644.7 343.2 L644.3 334.7Z" fill="#854300" stroke="#854300" stroke-width="0.4"/><path d="M645.9 332.9 L691.2 333.1 L690.8 324.6 L645.5 324.4Z" fill="#dd7105" fill-rule="evenodd"/>
<path d="M189.6 497.7 L219.8 497.8 L220.1 502.3 L190.0 502.2Z" fill="#5a2d00" stroke="#5a2d00" stroke-width="0.4"/><path d="M219.8 497.8 L221.5 444.6 L221.8 449.3 L220.1 502.3Z" fill="#6d3700" stroke="#6d3700" stroke-width="0.4"/><path d="M189.6 497.7 L219.8 497.8 L221.5 444.6 L191.6 444.5Z" fill="#dd7105" fill-rule="evenodd"/>
<ellipse cx="205.3" cy="484.3" rx="8.5" ry="7.2" fill="#623100"/><ellipse cx="205.1" cy="481.4" rx="8.5" ry="7.2" fill="#dd7105"/>
<path d="M297.0 558.6 L297.6 561.3 L298.3 582.1 L297.7 579.4Z" fill="#bf6205" stroke="#bf6205" stroke-width="0.4"/><path d="M297.6 561.3 L299.3 563.6 L300.1 584.4 L298.3 582.1Z" fill="#b95f03" stroke="#b95f03" stroke-width="0.4"/><path d="M299.3 563.6 L302.0 565.2 L302.7 586.0 L300.1 584.4Z" fill="#b55b01" stroke="#b55b01" stroke-width="0.4"/><path d="M302.0 565.2 L305.2 565.7 L305.8 586.5 L302.7 586.0Z" fill="#af5800" stroke="#af5800" stroke-width="0.4"/><path d="M305.2 565.7 L323.3 565.8 L323.8 586.6 L305.8 586.5Z" fill="#ab5600" stroke="#ab5600" stroke-width="0.4"/><path d="M323.3 565.8 L326.5 565.2 L326.9 586.1 L323.8 586.6Z" fill="#a75400" stroke="#a75400" stroke-width="0.4"/><path d="M326.5 565.2 L329.2 563.7 L329.6 584.5 L326.9 586.1Z" fill="#9f5000" stroke="#9f5000" stroke-width="0.4"/><path d="M329.2 563.7 L331.1 561.4 L331.5 582.2 L329.6 584.5Z" fill="#964b00" stroke="#964b00" stroke-width="0.4"/><path d="M331.1 561.4 L331.7 558.7 L332.1 579.5 L331.5 582.2Z" fill="#904800" stroke="#904800" stroke-width="0.4"/><path d="M331.7 558.7 L331.8 548.8 L332.2 569.7 L332.1 579.5Z" fill="#8d4700" stroke="#8d4700" stroke-width="0.4"/><path d="M331.8 548.8 L331.2 546.1 L329.5 543.8 L326.8 542.3 L323.6 541.7 L305.6 541.6 L302.4 542.2 L299.7 543.7 L297.9 546.0 L297.2 548.7 L297.0 558.6 L297.6 561.3 L299.3 563.6 L302.0 565.2 L305.2 565.7 L323.3 565.8 L326.5 565.2 L329.2 563.7 L331.1 561.4 L331.7 558.7Z" fill="#dd7105" fill-rule="evenodd"/>
<polygon points="331.8,548.8 331.2,546.1 329.5,543.8 326.8,542.3 323.6,541.7 305.6,541.6 302.4,542.2 299.7,543.7 297.9,546.0 297.2,548.7 297.0,558.6 297.6,561.3 299.3,563.6 302.0,565.2 305.2,565.7 323.3,565.8 326.5,565.2 329.2,563.7 331.1,561.4 331.7,558.7" fill="#c56301"/><polygon points="329.4,548.0 328.9,545.6 327.3,543.7 325.0,542.3 322.3,541.9 306.8,541.8 304.0,542.3 301.7,543.6 300.1,545.6 299.5,547.9 299.4,556.4 299.9,558.7 301.4,560.7 303.7,562.0 306.4,562.5 322.0,562.6 324.8,562.1 327.1,560.8 328.7,558.8 329.3,556.5" fill="#dd7105"/>
<g><line x1="53.4" y1="915" x2="57" y2="830" stroke="#1fd01f" stroke-width="2.6"/><polygon points="53.5,832 61,832 57.3,814" fill="#1fd01f"/><line x1="53" y1="915" x2="45.5" y2="878" stroke="#0a0ab4" stroke-width="3"/><polygon points="39.5,880 50.5,878 43,863" fill="#0a0ab4"/><line x1="53.4" y1="915.2" x2="150" y2="915.5" stroke="#d40a0a" stroke-width="3"/><polygon points="146,911.3 146,919.7 165,915.5" fill="#d40a0a"/></g>
<path d="M91,13 H657.5 V58 Q657.5,61 654.5,61 H94 Q91,61 91,58 Z" fill="#5c5c5c" fill-opacity="0.86"/>
<g stroke="#ffffff" fill="none" stroke-width="1.5" stroke-linejoin="round" stroke-linecap="round"><path d="M102,32 L110.5,24 H129 V36.5 M129,24 L120.5,32 M102,32 H120.5 V38 M102,32 V50 H117"/><circle cx="123.3" cy="44.8" r="6"/><path d="M119.8,44.8 H126.8 M123.3,41.3 V48.3"/></g>
<g stroke="#858585" fill="none" stroke-width="1.5" stroke-linejoin="round" stroke-linecap="round" stroke-dasharray="2.2 1.6"><path d="M142,32 L150.5,24 H169 V36 M169,24 L160.5,32 M142,32 H160.5 V38 M142,32 V50 H157"/></g><g stroke="#858585" fill="none" stroke-width="1.5" stroke-linejoin="round" stroke-linecap="round"><circle cx="163" cy="44.8" r="6" stroke-dasharray="2.2 1.4"/><path d="M159.5,44.8 H166.5"/></g>
<g stroke="#ffffff" fill="none" stroke-width="1.5" stroke-linejoin="round" stroke-linecap="round"><path d="M182.5,26.2 H205.5 M190.5,26 L191.2,23.6 H197 L197.6,26 M183.3,29 H204.8 M183.3,29 L185.6,50 H202.6 L204.8,29"/></g>
<g stroke="#ffffff" fill="none" stroke-width="1.5" stroke-linejoin="round" stroke-linecap="round"><rect x="220.7" y="24" width="25.8" height="25.8"/><rect x="224.6" y="28" width="18" height="6.6"/><rect x="224.6" y="38.6" width="5.6" height="7.2"/><rect x="233.6" y="38.6" width="9" height="7.2"/></g>
<g stroke="#858585" fill="none" stroke-width="1.5" stroke-linejoin="round" stroke-linecap="round" stroke-width="1.2"><path d="M269.0,24.0 H279.0 L283.0,28.0 V42.0 H269.0 Z"/><circle cx="276.0" cy="34.5" r="3.3"/></g>
<g stroke="#858585" stroke-width="1.5" stroke-linejoin="round" stroke-linecap="round" stroke-width="1.2" fill="#5e5e5e"><path d="M280.5,32.0 H291.0 L295.0,36.0 V50.0 H280.5 Z"/><circle cx="287.8" cy="42.5" r="3.3"/></g>
<g stroke="#858585" fill="none" stroke-width="1.5" stroke-linejoin="round" stroke-linecap="round"><path d="M321,26.5 H309 V46 H319 M313,26.5 V23.8 H324 V26.5"/></g>
<g stroke="#858585" stroke-width="1.5" stroke-linejoin="round" stroke-linecap="round" fill="#5e5e5e"><path d="M320.5,32.0 H331.0 L335.0,36.0 V50.0 H320.5 Z"/><circle cx="327.8" cy="42.5" r="3.3"/></g>
<g stroke="#858585" fill="none" stroke-width="1.5" stroke-linejoin="round" stroke-linecap="round"><circle cx="370.2" cy="37.2" r="12.6" stroke-dasharray="2.4 1.8"/><path d="M362.5,37.2 H378 M370.2,29.5 V45"/><circle cx="409.6" cy="37.2" r="12.6" stroke-dasharray="2.4 1.8"/><path d="M402,37.2 H417.4"/></g>
<g stroke="#858585" fill="none" stroke-width="1.5" stroke-linejoin="round" stroke-linecap="round"><path d="M451.0,40.5 H445.0 V24.3 H463.6 V31"/><rect x="452.6" y="31.3" width="18.6" height="18.6"/></g>
<text x="462.0" y="47.3" font-family="Liberation Sans, sans-serif" font-size="15.5" fill="#858585" text-anchor="middle" textLength="8.5" lengthAdjust="spacingAndGlyphs">O</text>
<g stroke="#858585" fill="none" stroke-width="1.5" stroke-linejoin="round" stroke-linecap="round"><path d="M490.7,40.5 H484.7 V24.3 H503.3 V31"/><rect x="492.3" y="31.3" width="18.6" height="18.6"/></g>
<text x="501.7" y="47.3" font-family="Liberation Sans, sans-serif" font-size="15.5" fill="#858585" text-anchor="middle">P</text>
<g fill="#858585"><rect x="533.2" y="24.0" width="26" height="1.0"/><rect x="533.2" y="27.7" width="26" height="1.4"/><rect x="533.2" y="31.6" width="26" height="1.8"/><rect x="533.2" y="35.7" width="26" height="2.2"/><rect x="533.2" y="40.2" width="26" height="2.6"/><rect x="533.2" y="45.2" width="26" height="3.2"/></g>
<g stroke="#ffffff" fill="none" stroke-width="1.5" stroke-linejoin="round" stroke-linecap="round"><path d="M588,27.6 L581,33.8 L588,39.2 M581.4,33.6 H598.5 A6.3,6.3 0 0 1 598.5,46.2 H590.5"/></g>
<g stroke="#7a7a7a" fill="none" stroke-width="1.5" stroke-linejoin="round" stroke-linecap="round"><path d="M639.6,27.6 L646.6,33.8 L639.6,39.2 M646.2,33.6 H629.1 A6.3,6.3 0 0 0 629.1,46.2 H637.1"/></g>
<polygon points="1279.8,37.7 1279.5,38.6 1277.9,38.7 1277.4,39.3 1277.7,40.9 1276.8,41.3 1275.6,40.2 1274.9,40.3 1273.9,41.6 1273.0,41.3 1272.9,39.7 1272.3,39.2 1270.7,39.5 1270.3,38.6 1271.4,37.4 1271.3,36.7 1270.0,35.7 1270.3,34.8 1271.9,34.7 1272.4,34.1 1272.1,32.5 1273.0,32.1 1274.2,33.2 1274.9,33.1 1275.9,31.8 1276.8,32.1 1276.9,33.7 1277.5,34.2 1279.1,33.9 1279.5,34.8 1278.4,36.0 1278.5,36.7" fill="#fff" stroke="#8c8c8c" stroke-width="0.9"/><circle cx="1274.9" cy="36.7" r="2.4" fill="none" stroke="#ed8b4a" stroke-width="1"/>
<polygon points="1596.1,37.5 1595.8,38.5 1594.2,38.6 1593.7,39.2 1593.9,40.8 1593.0,41.3 1591.7,40.2 1591.0,40.3 1590.0,41.6 1589.0,41.3 1588.9,39.7 1588.3,39.2 1586.7,39.4 1586.2,38.5 1587.3,37.2 1587.2,36.5 1585.9,35.5 1586.2,34.5 1587.8,34.4 1588.3,33.8 1588.1,32.2 1589.0,31.7 1590.3,32.8 1591.0,32.7 1592.0,31.4 1593.0,31.7 1593.1,33.3 1593.7,33.8 1595.3,33.6 1595.8,34.5 1594.7,35.8 1594.8,36.5" fill="#fff" stroke="#8c8c8c" stroke-width="0.9"/><circle cx="1591.0" cy="36.5" r="2.6" fill="none" stroke="#ed8b4a" stroke-width="1"/>
<polygon points="1596.1,73.0 1595.8,74.0 1594.2,74.1 1593.7,74.7 1593.9,76.3 1593.0,76.8 1591.7,75.7 1591.0,75.8 1590.0,77.1 1589.0,76.8 1588.9,75.2 1588.3,74.7 1586.7,74.9 1586.2,74.0 1587.3,72.7 1587.2,72.0 1585.9,71.0 1586.2,70.0 1587.8,69.9 1588.3,69.3 1588.1,67.7 1589.0,67.2 1590.3,68.3 1591.0,68.2 1592.0,66.9 1593.0,67.2 1593.1,68.8 1593.7,69.3 1595.3,69.1 1595.8,70.0 1594.7,71.3 1594.8,72.0" fill="#fff" stroke="#8c8c8c" stroke-width="0.9"/><circle cx="1591.0" cy="72.0" r="2.6" fill="none" stroke="#ed8b4a" stroke-width="1"/>
<polygon points="1596.1,108.5 1595.8,109.5 1594.2,109.6 1593.7,110.2 1593.9,111.8 1593.0,112.3 1591.7,111.2 1591.0,111.3 1590.0,112.6 1589.0,112.3 1588.9,110.7 1588.3,110.2 1586.7,110.4 1586.2,109.5 1587.3,108.2 1587.2,107.5 1585.9,106.5 1586.2,105.5 1587.8,105.4 1588.3,104.8 1588.1,103.2 1589.0,102.7 1590.3,103.8 1591.0,103.7 1592.0,102.4 1593.0,102.7 1593.1,104.3 1593.7,104.8 1595.3,104.6 1595.8,105.5 1594.7,106.8 1594.8,107.5" fill="#fff" stroke="#8c8c8c" stroke-width="0.9"/><circle cx="1591.0" cy="107.5" r="2.6" fill="none" stroke="#ed8b4a" stroke-width="1"/>
<path d="M1566.9,35.0 l4.3,4.2 l4.3,-4.2" fill="none" stroke="#222" stroke-width="1.3"/>
<path d="M1566.9,70.3 l4.3,4.2 l4.3,-4.2" fill="none" stroke="#222" stroke-width="1.3"/>
<path d="M1566.9,105.7 l4.3,4.2 l4.3,-4.2" fill="none" stroke="#222" stroke-width="1.3"/>
<path d="M1566.9,131.0 l4.3,4.2 l4.3,-4.2" fill="none" stroke="#222" stroke-width="1.3"/>
<path d="M1334.3,153.5 l4.3,4.2 l4.3,-4.2" fill="none" stroke="#222" stroke-width="1.3"/>
<rect x="1265.2" y="66.4" width="19.4" height="12.4" fill="#ff8000" stroke="#c9690a" stroke-width="0.6"/>
<g><path d="M1290.4,71.1 v-2.6 a2.7,2.7 0 0 1 5.4,0 v2.6" fill="none" stroke="#8a8a8a" stroke-width="1.3"/><rect x="1288.6" y="71.0" width="9" height="6.2" fill="#8a8a8a"/><rect x="1291.3" y="73.2" width="3.6" height="1.6" fill="#fff"/></g>
<g><path d="M1290.4,106.7 v-2.6 a2.7,2.7 0 0 1 5.4,0 v2.6" fill="none" stroke="#8a8a8a" stroke-width="1.3"/><rect x="1288.6" y="106.6" width="9" height="6.2" fill="#8a8a8a"/><rect x="1291.3" y="108.8" width="3.6" height="1.6" fill="#fff"/></g>
<g><rect x="1269.6" y="102.6" width="11" height="9.6" fill="#fff" stroke="#8a8a8a" stroke-width="1"/><rect x="1271" y="104" width="2.6" height="2.6" fill="#ed6b21"/><path d="M1269.6,107.6 h11" stroke="#bdbdbd" stroke-width="0.7"/></g>
<g fill="none" stroke="#6e6e6e" stroke-width="1.2"><path d="M1430.6,200.0 q5.6,-7 11.2,0 q-5.6,7 -11.2,0z"/><circle cx="1436.2" cy="200.0" r="1.9" fill="#6e6e6e" stroke="none"/></g>
<g fill="none"><path d="M1522.6,197.8 h-4.6 v7.6 h7.4 v-4.4" stroke="#8a8a8a" stroke-width="1.1"/><circle cx="1525.0" cy="197.2" r="1.9" stroke="#ed6b21" stroke-width="1.1"/></g>
<g fill="none" stroke="#6e6e6e" stroke-width="1.2"><path d="M1430.6,218.1 q5.6,-7 11.2,0 q-5.6,7 -11.2,0z"/><circle cx="1436.2" cy="218.1" r="1.9" fill="#6e6e6e" stroke="none"/></g>
<g fill="none"><path d="M1522.6,215.9 h-4.6 v7.6 h7.4 v-4.4" stroke="#8a8a8a" stroke-width="1.1"/><circle cx="1525.0" cy="215.3" r="1.9" stroke="#ed6b21" stroke-width="1.1"/></g>
<g fill="none" stroke="#6e6e6e" stroke-width="1.2"><path d="M1430.6,236.2 q5.6,-7 11.2,0 q-5.6,7 -11.2,0z"/><circle cx="1436.2" cy="236.2" r="1.9" fill="#6e6e6e" stroke="none"/></g>
<g fill="none"><path d="M1522.6,234.0 h-4.6 v7.6 h7.4 v-4.4" stroke="#8a8a8a" stroke-width="1.1"/><circle cx="1525.0" cy="233.4" r="1.9" stroke="#ed6b21" stroke-width="1.1"/></g>
<g fill="none" stroke="#6e6e6e" stroke-width="1.2"><path d="M1430.6,254.2 q5.6,-7 11.2,0 q-5.6,7 -11.2,0z"/><circle cx="1436.2" cy="254.2" r="1.9" fill="#6e6e6e" stroke="none"/></g>
<g fill="none"><path d="M1522.6,252.0 h-4.6 v7.6 h7.4 v-4.4" stroke="#8a8a8a" stroke-width="1.1"/><circle cx="1525.0" cy="251.4" r="1.9" stroke="#ed6b21" stroke-width="1.1"/></g>
<g fill="none" stroke="#6e6e6e" stroke-width="1.2"><path d="M1430.6,272.3 q5.6,-7 11.2,0 q-5.6,7 -11.2,0z"/><circle cx="1436.2" cy="272.3" r="1.9" fill="#6e6e6e" stroke="none"/></g>
<g fill="none"><path d="M1522.6,270.1 h-4.6 v7.6 h7.4 v-4.4" stroke="#8a8a8a" stroke-width="1.1"/><circle cx="1525.0" cy="269.5" r="1.9" stroke="#ed6b21" stroke-width="1.1"/></g>
<g fill="none" stroke="#6e6e6e" stroke-width="1.2"><path d="M1430.6,290.4 q5.6,-7 11.2,0 q-5.6,7 -11.2,0z"/><circle cx="1436.2" cy="290.4" r="1.9" fill="#6e6e6e" stroke="none"/></g>
<g fill="none"><path d="M1522.6,288.2 h-4.6 v7.6 h7.4 v-4.4" stroke="#8a8a8a" stroke-width="1.1"/><circle cx="1525.0" cy="287.6" r="1.9" stroke="#ed6b21" stroke-width="1.1"/></g>
<g fill="none" stroke="#6e6e6e" stroke-width="1.2"><path d="M1430.6,308.5 q5.6,-7 11.2,0 q-5.6,7 -11.2,0z"/><circle cx="1436.2" cy="308.5" r="1.9" fill="#6e6e6e" stroke="none"/></g>
<g fill="none"><path d="M1522.6,306.3 h-4.6 v7.6 h7.4 v-4.4" stroke="#8a8a8a" stroke-width="1.1"/><circle cx="1525.0" cy="305.7" r="1.9" stroke="#ed6b21" stroke-width="1.1"/></g>
<path d="M1390,0 L1393.5,3 L1397,0Z" fill="#e0141e"/><circle cx="1515" cy="-4" r="8.5" fill="none" stroke="#444" stroke-width="1.2"/>
<path d="M1245.5,-0.5 l4.6,3.4" stroke="#555" stroke-width="1.8"/>
</svg>
</body></html>
